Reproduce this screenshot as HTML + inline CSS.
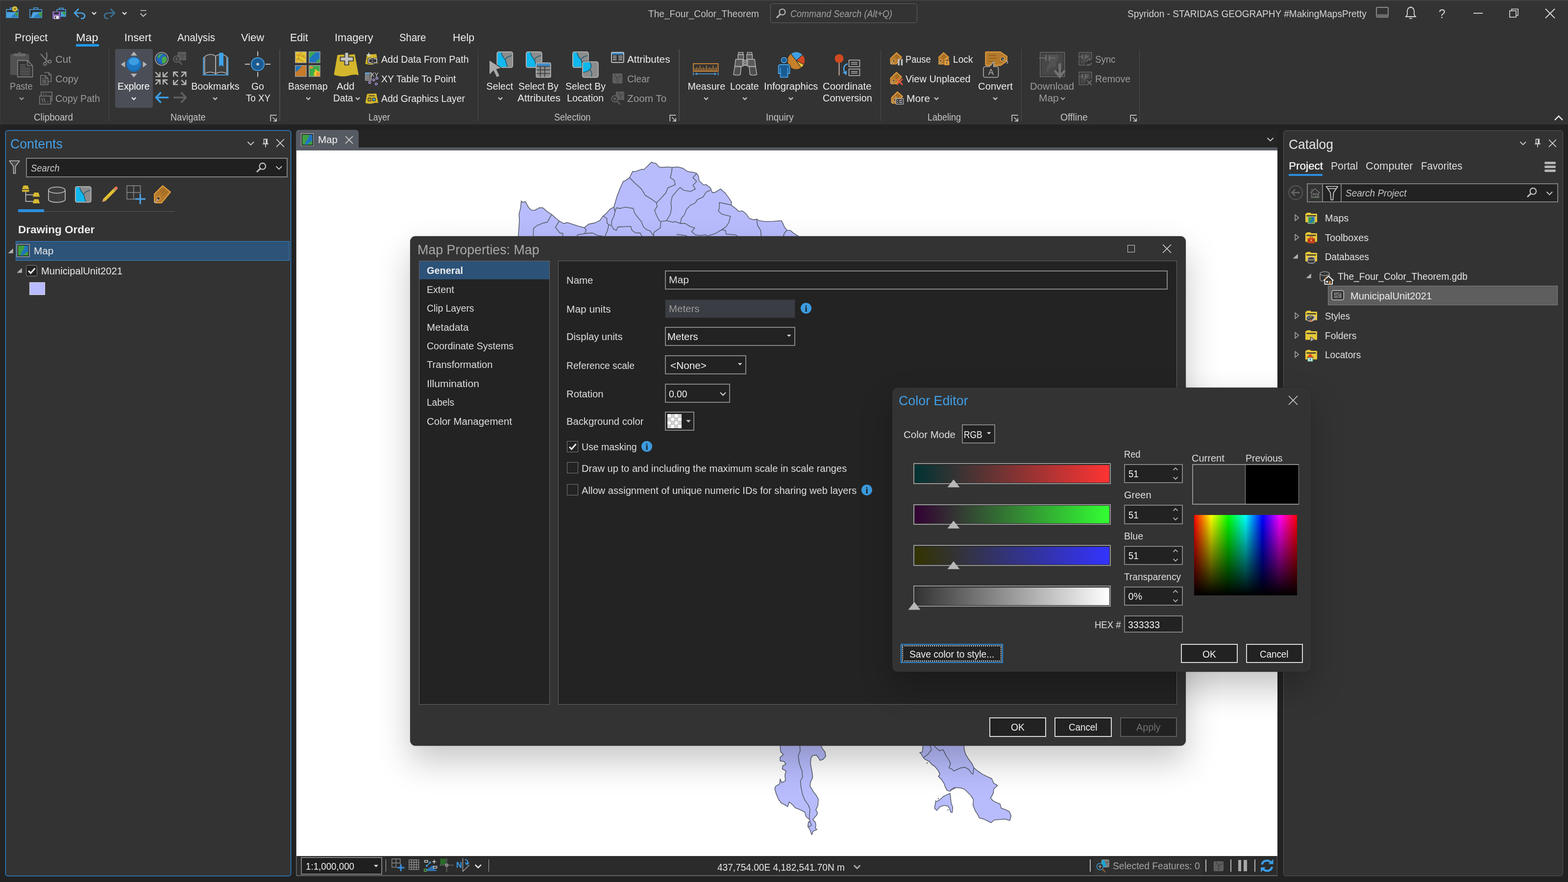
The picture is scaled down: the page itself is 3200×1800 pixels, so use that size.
<!DOCTYPE html>
<html lang="en"><head><meta charset="utf-8"><title>ArcGIS Pro - Map Properties</title>
<style>
*{box-sizing:border-box;margin:0;padding:0}
html,body{width:3200px;height:1800px;overflow:hidden;background:#222222;font-family:"Liberation Sans",sans-serif;}
.r{position:absolute;display:block}
.t{position:absolute;display:block;white-space:nowrap;line-height:1;transform-origin:0 50%;}
#root{position:absolute;left:0;top:0;width:3200px;height:1800px;overflow:hidden;will-change:transform}
</style></head>
<body><div id="root">
<!-- p_base -->
<div class="r" style="left:0.0px;top:0.0px;width:3200.0px;height:254.0px;background:#333333;"></div>
<div class="r" style="left:0.0px;top:0.0px;width:3200.0px;height:1.5px;background:#404040;"></div>
<div class="r" style="left:0.0px;top:0.0px;width:1.3px;height:254.0px;background:#3d3d3d;"></div>
<!-- icons_qat -->
<svg class="r" style="left:12.0px;top:12.0px;" width="28" height="25" viewBox="0 -1 28 25"><path d="M9 6.5 V3 H17 V6.5" fill="none" stroke="#4aa3e3" stroke-width="1.6" /><rect x="1" y="6.5" width="24" height="16.5" fill="#2b2b2b" stroke="#4aa3e3" stroke-width="1.6"/><path d="M1.8 11.5 H24.2 V22.2 H1.8 Z" fill="#4aa3e3" /><path d="M11 22.2 C13 17 17 15 21 15.5 L24.2 18 V22.2 Z" fill="#2f80c0" /><path d="M17 15 L24.2 11.5 V21 Z" fill="#3f9c3a" /><polygon points="24.4,5.2 22.3,6.9 22.6,9.6 19.9,9.3 18.2,11.4 16.5,9.3 13.8,9.6 14.1,6.9 12.0,5.2 14.1,3.5 13.8,0.8 16.5,1.1 18.2,-1.0 19.9,1.1 22.6,0.8 22.3,3.5" fill="#f0d23c"/><circle cx="18.2" cy="5.2" r="2.6" fill="#9a7d1c"/></svg>
<svg class="r" style="left:59.5px;top:12.0px;" width="28" height="25" viewBox="0 -1 28 25"><path d="M9 6.5 V3 H17 V6.5" fill="none" stroke="#4aa3e3" stroke-width="1.6" /><rect x="1" y="6.5" width="24" height="16.5" fill="#2b2b2b" stroke="#4aa3e3" stroke-width="1.6"/><path d="M3 23 L7 11.5 H27 L23 23 Z" fill="#4aa3e3" /><path d="M9 23 C12 17 16 15 21 15.5 L24 23 Z" fill="#2f80c0" /><path d="M18 14 L26.5 12 L23.5 22 Z" fill="#3f9c3a" /></svg>
<svg class="r" style="left:106.5px;top:12.5px;" width="28" height="27" viewBox="0 0 28 27"><path d="M14 6.5 V3.5 H22 V6.5" fill="none" stroke="#4aa3e3" stroke-width="1.6" /><rect x="9" y="6.5" width="18" height="14" fill="#2b2b2b" stroke="#4aa3e3" stroke-width="1.6"/><path d="M17 10.5 H26.2 V19.8 H17 Z" fill="#4aa3e3" /><path d="M19 13 L26 10.5 V19 Z" fill="#3f9c3a" /><rect x="0.8" y="10.5" width="14.5" height="15" fill="#8c6bc0" stroke="#8c6bc0" stroke-width="1.2" rx="1.5"/><rect x="3.2" y="11.5" width="9.5" height="5" fill="#333333"/><rect x="3.8" y="19.5" width="9" height="6" fill="#f0f0f0"/><rect x="5" y="20.5" width="2.5" height="4" fill="#333333"/></svg>
<svg class="r" style="left:149.5px;top:15.5px;" width="26" height="25" viewBox="0 0 26 25"><path d="M10.5 2 L2 10.5 L10.5 19 M2.5 10.5 H14.5 C20.5 10.5 23 14 23 16.5 C23 20 20 22 15 22" fill="none" stroke="#4aa3e3" stroke-width="2.7" stroke-linejoin="miter"/></svg>
<svg class="r" style="left:186.4px;top:22.9px;" width="12.2" height="8.1" viewBox="0 0 12.2 8.1"><path d="M2 2 L6.1 6.1 L10.2 2" fill="none" stroke="#e0e0e0" stroke-width="2.3"/></svg>
<svg class="r" style="left:210.0px;top:15.5px;" width="26" height="25" viewBox="0 0 26 25"><path d="M15.5 2 L24 10.5 L15.5 19 M23.5 10.5 H11.5 C5.5 10.5 3 14 3 16.5 C3 20 6 22 11 22" fill="none" stroke="#3d7295" stroke-width="2.7" /></svg>
<svg class="r" style="left:247.9px;top:22.9px;" width="12.2" height="8.1" viewBox="0 0 12.2 8.1"><path d="M2 2 L6.1 6.1 L10.2 2" fill="none" stroke="#e0e0e0" stroke-width="2.3"/></svg>
<svg class="r" style="left:285.0px;top:19.0px;" width="15" height="17" viewBox="0 0 15 17"><path d="M1.5 2.5 H13.5" fill="none" stroke="#c8c8c8" stroke-width="1.6" /><path d="M1.5 8.5 L7.5 14.5 L13.5 8.5" fill="none" stroke="#c8c8c8" stroke-width="1.8" /></svg>
<svg class="r" style="left:2807.0px;top:12.0px;" width="30" height="30" viewBox="0 0 30 30"><rect x="2" y="3" width="24" height="20" fill="none" stroke="#8a8a8a" stroke-width="2" rx="2"/><rect x="2" y="17" width="24" height="6" fill="#6a6a6a"/></svg>
<svg class="r" style="left:2866.0px;top:12.0px;" width="26" height="28" viewBox="0 0 26 28"><path d="M13 3 C8 3 6 7 6 12 V18 L3 22 H23 L20 18 V12 C20 7 18 3 13 3 Z" fill="none" stroke="#d8d8d8" stroke-width="1.8" /><path d="M10 25.5 H16" fill="none" stroke="#d8d8d8" stroke-width="1.8" /><circle cx="13" cy="2.5" r="1.2" fill="#d8d8d8"/></svg>
<svg class="r" style="left:3007.0px;top:25.0px;" width="19" height="4" viewBox="0 0 19 4"><path d="M0 2 H19" fill="none" stroke="#d8d8d8" stroke-width="1.8" /></svg>
<svg class="r" style="left:3080.0px;top:17.0px;" width="20" height="20" viewBox="0 0 20 20"><rect x="1" y="5" width="13" height="13" fill="none" stroke="#d8d8d8" stroke-width="1.6"/><path d="M5 5 V1.5 H18 V14.5 H14" fill="none" stroke="#d8d8d8" stroke-width="1.6" /></svg>
<svg class="r" style="left:3153.0px;top:17.0px;" width="21" height="21" viewBox="0 0 21 21"><path d="M1 1 L20 20 M20 1 L1 20" fill="none" stroke="#d8d8d8" stroke-width="1.8" /></svg>
<svg class="r" style="left:3171.0px;top:234.0px;" width="20" height="13" viewBox="0 0 20 13"><path d="M2 11 L10 3 L18 11" fill="none" stroke="#f0f0f0" stroke-width="2.4" /></svg>
<svg class="r" style="left:1583.0px;top:16.0px;" width="22" height="24" viewBox="0 0 22 24"><circle cx="13.5" cy="8.5" r="6" fill="none" stroke="#b8b8b8" stroke-width="2.2"/><path d="M9.3 12.8 L2 20.5" fill="none" stroke="#b8b8b8" stroke-width="3" /></svg>
<!-- p_ribbon -->
<span class="t" style="left:1323.2px;top:18.1px;font-size:20.5px;color:#c4c4c4;transform:scaleX(0.931);">The_Four_Color_Theorem</span>
<div class="r" style="left:1572.0px;top:7.0px;width:299.5px;height:39.5px;border:1.5px solid #636363;border-radius:5px;"></div>
<span class="t" style="left:1612.7px;top:18.4px;font-size:20.5px;color:#a0a0a0;font-style:italic;transform:scaleX(0.880);">Command Search (Alt+Q)</span>
<span class="t" style="left:2300.9px;top:18.1px;font-size:20.5px;color:#d4d4d4;transform:scaleX(0.930);">Spyridon - STARIDAS GEOGRAPHY #MakingMapsPretty</span>
<span class="t" style="left:2936.2px;top:15.0px;font-size:26px;color:#d0d0d0;transform:scaleX(0.950);">?</span>
<span class="t" style="left:29.9px;top:65.8px;font-size:22px;color:#ececec;transform:scaleX(0.983);">Project</span>
<span class="t" style="left:155.2px;top:65.8px;font-size:22px;color:#f2f2f2;transform:scaleX(1.063);">Map</span>
<span class="t" style="left:253.8px;top:65.8px;font-size:22px;color:#ececec;">Insert</span>
<span class="t" style="left:362.2px;top:65.8px;font-size:22px;color:#ececec;transform:scaleX(0.941);">Analysis</span>
<span class="t" style="left:492.4px;top:65.8px;font-size:22px;color:#ececec;transform:scaleX(0.996);">View</span>
<span class="t" style="left:592.4px;top:65.8px;font-size:22px;color:#ececec;transform:scaleX(0.970);">Edit</span>
<span class="t" style="left:682.6px;top:65.8px;font-size:22px;color:#ececec;transform:scaleX(0.989);">Imagery</span>
<span class="t" style="left:815.4px;top:65.8px;font-size:22px;color:#ececec;transform:scaleX(0.928);">Share</span>
<span class="t" style="left:924.1px;top:65.8px;font-size:22px;color:#ececec;transform:scaleX(0.977);">Help</span>
<div class="r" style="left:155.0px;top:89.5px;width:47.0px;height:5.5px;background:#1e98ea;"></div>
<div class="r" style="left:221.8px;top:101.0px;width:1.5px;height:146.0px;background:#4b4b4b;"></div>
<div class="r" style="left:570.0px;top:101.0px;width:1.5px;height:146.0px;background:#4b4b4b;"></div>
<div class="r" style="left:974.8px;top:101.0px;width:1.5px;height:146.0px;background:#4b4b4b;"></div>
<div class="r" style="left:1385.0px;top:101.0px;width:1.5px;height:146.0px;background:#4b4b4b;"></div>
<div class="r" style="left:1796.7px;top:101.0px;width:1.5px;height:146.0px;background:#4b4b4b;"></div>
<div class="r" style="left:2083.7px;top:101.0px;width:1.5px;height:146.0px;background:#4b4b4b;"></div>
<div class="r" style="left:2324.9px;top:101.0px;width:1.5px;height:146.0px;background:#4b4b4b;"></div>
<span class="t" style="left:69.2px;top:230.2px;font-size:19.7px;color:#c4c4c4;transform:scaleX(0.949);">Clipboard</span>
<span class="t" style="left:348.2px;top:230.2px;font-size:19.7px;color:#c4c4c4;transform:scaleX(0.920);">Navigate</span>
<span class="t" style="left:751.5px;top:230.2px;font-size:19.7px;color:#c4c4c4;transform:scaleX(0.893);">Layer</span>
<span class="t" style="left:1131.0px;top:230.2px;font-size:19.7px;color:#c4c4c4;transform:scaleX(0.917);">Selection</span>
<span class="t" style="left:1562.6px;top:230.2px;font-size:19.7px;color:#c4c4c4;transform:scaleX(0.961);">Inquiry</span>
<span class="t" style="left:1892.6px;top:230.2px;font-size:19.7px;color:#c4c4c4;transform:scaleX(0.915);">Labeling</span>
<span class="t" style="left:2164.0px;top:230.2px;font-size:19.7px;color:#c4c4c4;transform:scaleX(0.985);">Offline</span>
<span class="t" style="left:19.6px;top:167.2px;font-size:19.7px;color:#9c9c9c;transform:scaleX(0.924);">Paste</span>
<svg class="r" style="left:37.9px;top:196.8px;" width="12.2" height="8.1" viewBox="0 0 12.2 8.1"><path d="M2 2 L6.1 6.1 L10.2 2" fill="none" stroke="#9c9c9c" stroke-width="2.3"/></svg>
<span class="t" style="left:112.7px;top:112.1px;font-size:19.7px;color:#9c9c9c;transform:scaleX(1.044);">Cut</span>
<span class="t" style="left:112.7px;top:151.9px;font-size:19.7px;color:#9c9c9c;transform:scaleX(1.022);">Copy</span>
<span class="t" style="left:112.7px;top:192.0px;font-size:19.7px;color:#9c9c9c;transform:scaleX(0.990);">Copy Path</span>
<div class="r" style="left:235.0px;top:100.0px;width:77.0px;height:120.0px;background:#4b4e56;border-radius:4px;"></div>
<span class="t" style="left:240.2px;top:167.2px;font-size:19.7px;color:#ffffff;transform:scaleX(0.981);">Explore</span>
<svg class="r" style="left:267.2px;top:196.8px;" width="12.2" height="8.1" viewBox="0 0 12.2 8.1"><path d="M2 2 L6.1 6.1 L10.2 2" fill="none" stroke="#f0f0f0" stroke-width="2.3"/></svg>
<span class="t" style="left:390.2px;top:167.2px;font-size:19.7px;color:#ececec;">Bookmarks</span>
<svg class="r" style="left:433.4px;top:196.8px;" width="12.2" height="8.1" viewBox="0 0 12.2 8.1"><path d="M2 2 L6.1 6.1 L10.2 2" fill="none" stroke="#c4c4c4" stroke-width="2.3"/></svg>
<span class="t" style="left:512.6px;top:167.2px;font-size:19.7px;color:#ececec;transform:scaleX(0.986);">Go</span>
<span class="t" style="left:502.2px;top:190.9px;font-size:19.7px;color:#ececec;transform:scaleX(0.950);">To XY</span>
<span class="t" style="left:588.2px;top:167.2px;font-size:19.7px;color:#ececec;transform:scaleX(0.968);">Basemap</span>
<svg class="r" style="left:622.9px;top:196.8px;" width="12.2" height="8.1" viewBox="0 0 12.2 8.1"><path d="M2 2 L6.1 6.1 L10.2 2" fill="none" stroke="#c4c4c4" stroke-width="2.3"/></svg>
<span class="t" style="left:686.9px;top:167.2px;font-size:19.7px;color:#ececec;transform:scaleX(1.042);">Add</span>
<span class="t" style="left:680.2px;top:190.9px;font-size:19.7px;color:#ececec;transform:scaleX(0.974);">Data</span>
<svg class="r" style="left:723.9px;top:196.8px;" width="12.2" height="8.1" viewBox="0 0 12.2 8.1"><path d="M2 2 L6.1 6.1 L10.2 2" fill="none" stroke="#c4c4c4" stroke-width="2.3"/></svg>
<span class="t" style="left:778.2px;top:112.1px;font-size:19.7px;color:#ececec;transform:scaleX(0.995);">Add Data From Path</span>
<span class="t" style="left:778.2px;top:151.9px;font-size:19.7px;color:#ececec;transform:scaleX(0.988);">XY Table To Point</span>
<span class="t" style="left:778.2px;top:192.0px;font-size:19.7px;color:#ececec;transform:scaleX(0.982);">Add Graphics Layer</span>
<span class="t" style="left:992.6px;top:167.2px;font-size:19.7px;color:#ececec;">Select</span>
<svg class="r" style="left:1014.5px;top:196.8px;" width="12.2" height="8.1" viewBox="0 0 12.2 8.1"><path d="M2 2 L6.1 6.1 L10.2 2" fill="none" stroke="#c4c4c4" stroke-width="2.3"/></svg>
<span class="t" style="left:1057.6px;top:167.2px;font-size:19.7px;color:#ececec;transform:scaleX(0.982);">Select By</span>
<span class="t" style="left:1055.7px;top:190.9px;font-size:19.7px;color:#ececec;transform:scaleX(1.058);">Attributes</span>
<span class="t" style="left:1153.9px;top:167.2px;font-size:19.7px;color:#ececec;transform:scaleX(0.984);">Select By</span>
<span class="t" style="left:1157.2px;top:190.9px;font-size:19.7px;color:#ececec;transform:scaleX(1.010);">Location</span>
<span class="t" style="left:1279.5px;top:112.1px;font-size:19.7px;color:#ececec;transform:scaleX(1.052);">Attributes</span>
<span class="t" style="left:1279.5px;top:151.9px;font-size:19.7px;color:#9c9c9c;transform:scaleX(0.982);">Clear</span>
<span class="t" style="left:1279.5px;top:192.0px;font-size:19.7px;color:#9c9c9c;transform:scaleX(1.052);">Zoom To</span>
<span class="t" style="left:1403.5px;top:167.2px;font-size:19.7px;color:#ececec;">Measure</span>
<svg class="r" style="left:1434.5px;top:196.8px;" width="12.2" height="8.1" viewBox="0 0 12.2 8.1"><path d="M2 2 L6.1 6.1 L10.2 2" fill="none" stroke="#c4c4c4" stroke-width="2.3"/></svg>
<span class="t" style="left:1490.2px;top:167.2px;font-size:19.7px;color:#ececec;transform:scaleX(0.989);">Locate</span>
<svg class="r" style="left:1513.9px;top:196.8px;" width="12.2" height="8.1" viewBox="0 0 12.2 8.1"><path d="M2 2 L6.1 6.1 L10.2 2" fill="none" stroke="#c4c4c4" stroke-width="2.3"/></svg>
<span class="t" style="left:1559.2px;top:167.2px;font-size:19.7px;color:#ececec;transform:scaleX(1.030);">Infographics</span>
<svg class="r" style="left:1607.9px;top:196.8px;" width="12.2" height="8.1" viewBox="0 0 12.2 8.1"><path d="M2 2 L6.1 6.1 L10.2 2" fill="none" stroke="#c4c4c4" stroke-width="2.3"/></svg>
<span class="t" style="left:1679.2px;top:167.2px;font-size:19.7px;color:#ececec;transform:scaleX(1.033);">Coordinate</span>
<span class="t" style="left:1679.2px;top:190.9px;font-size:19.7px;color:#ececec;transform:scaleX(1.014);">Conversion</span>
<span class="t" style="left:1847.9px;top:112.1px;font-size:19.7px;color:#ececec;transform:scaleX(0.924);">Pause</span>
<span class="t" style="left:1944.6px;top:112.1px;font-size:19.7px;color:#ececec;transform:scaleX(0.976);">Lock</span>
<span class="t" style="left:1847.9px;top:151.9px;font-size:19.7px;color:#ececec;transform:scaleX(1.013);">View Unplaced</span>
<span class="t" style="left:1849.8px;top:192.0px;font-size:19.7px;color:#ececec;transform:scaleX(1.068);">More</span>
<svg class="r" style="left:1904.9px;top:196.8px;" width="12.2" height="8.1" viewBox="0 0 12.2 8.1"><path d="M2 2 L6.1 6.1 L10.2 2" fill="none" stroke="#c4c4c4" stroke-width="2.3"/></svg>
<span class="t" style="left:1996.2px;top:167.2px;font-size:19.7px;color:#ececec;transform:scaleX(1.030);">Convert</span>
<svg class="r" style="left:2024.9px;top:196.8px;" width="12.2" height="8.1" viewBox="0 0 12.2 8.1"><path d="M2 2 L6.1 6.1 L10.2 2" fill="none" stroke="#c4c4c4" stroke-width="2.3"/></svg>
<span class="t" style="left:2101.8px;top:167.2px;font-size:19.7px;color:#9c9c9c;transform:scaleX(1.027);">Download</span>
<span class="t" style="left:2120.0px;top:190.9px;font-size:19.7px;color:#9c9c9c;transform:scaleX(1.062);">Map</span>
<svg class="r" style="left:2163.4px;top:196.8px;" width="12.2" height="8.1" viewBox="0 0 12.2 8.1"><path d="M2 2 L6.1 6.1 L10.2 2" fill="none" stroke="#9c9c9c" stroke-width="2.3"/></svg>
<span class="t" style="left:2235.0px;top:112.1px;font-size:19.7px;color:#9c9c9c;transform:scaleX(0.946);">Sync</span>
<span class="t" style="left:2235.0px;top:151.9px;font-size:19.7px;color:#9c9c9c;transform:scaleX(0.983);">Remove</span>
<!-- icons_ribbon -->
<svg class="r" style="left:19.5px;top:105.5px;" width="48" height="53" viewBox="0 0 48 53"><rect x="0.8" y="4" width="39" height="43" fill="#515151" rx="2.5"/><rect x="7" y="3.2" width="26" height="5.8" fill="#6a6a6a" stroke="#585858" stroke-width="1" rx="2.8"/><circle cx="19.8" cy="2.6" r="1.9" fill="none" stroke="#6a6a6a" stroke-width="1.6"/><path d="M16 17.5 H36 L46.5 28 V51 H16 Z" fill="#333333" stroke="#7e7e7e" stroke-width="1.8" /><path d="M36 17.5 V28 H46.5" fill="none" stroke="#7e7e7e" stroke-width="1.6" /><path d="M21 26.3 H32" fill="none" stroke="#6e6e6e" stroke-width="1.4" /><path d="M21 29.7 H32" fill="none" stroke="#6e6e6e" stroke-width="1.4" /><path d="M21 33.1 H42" fill="none" stroke="#6e6e6e" stroke-width="1.4" /><path d="M21 36.5 H42" fill="none" stroke="#6e6e6e" stroke-width="1.4" /><path d="M21 39.9 H42" fill="none" stroke="#6e6e6e" stroke-width="1.4" /><path d="M21 43.3 H42" fill="none" stroke="#6e6e6e" stroke-width="1.4" /><path d="M21 46.7 H42" fill="none" stroke="#6e6e6e" stroke-width="1.4" /></svg>
<svg class="r" style="left:82.3px;top:106.0px;" width="25" height="29" viewBox="0 0 25 29"><path d="M1 4 L17 22 M12.5 0.5 C14.5 5 14 12 11 19.5" fill="none" stroke="#7c7c7c" stroke-width="2.2" /><circle cx="19.6" cy="19.6" r="2.9" fill="none" stroke="#7c7c7c" stroke-width="1.9"/><circle cx="9.8" cy="24.2" r="2.9" fill="none" stroke="#7c7c7c" stroke-width="1.9"/></svg>
<svg class="r" style="left:81.5px;top:146.5px;" width="24" height="27" viewBox="0 0 24 27"><path d="M8.5 1 H17.5 L22.5 6 V19.5 H17" fill="none" stroke="#7c7c7c" stroke-width="1.6" /><path d="M17.5 1 V6 H22.5" fill="none" stroke="#7c7c7c" stroke-width="1.4" /><path d="M1 7 H10 L16 13 V26 H1 Z" fill="#333333" stroke="#7c7c7c" stroke-width="1.6" /><path d="M10 7 V13 H16" fill="none" stroke="#7c7c7c" stroke-width="1.4" /><path d="M4 13 H7.5 M4 16.5 H13 M4 19.5 H13 M4 22.5 H13" fill="none" stroke="#7c7c7c" stroke-width="1.3" /></svg>
<svg class="r" style="left:80.0px;top:186.8px;" width="27" height="27" viewBox="0 0 27 27"><path d="M4 8 V1 H26 V18.5 H24" fill="none" stroke="#7c7c7c" stroke-width="1.6" /><path d="M8 5.5 H10.5 M13 5.5 H15.5" fill="none" stroke="#7c7c7c" stroke-width="1.3" /><rect x="0.8" y="9" width="22.5" height="16.5" fill="#333333" stroke="#7c7c7c" stroke-width="1.6"/><path d="M5.5 13 L8 22 M10 13 L12.5 22 M16.5 21 H18.5" fill="none" stroke="#7c7c7c" stroke-width="1.5" /></svg>
<svg class="r" style="left:246.0px;top:105.0px;" width="55" height="54" viewBox="0 0 55 54"><circle cx="27.2" cy="26.4" r="15.3" fill="#1a6db5"/><circle cx="27.2" cy="24.6" r="13.4" fill="#1f78c4"/><ellipse cx="27.2" cy="20.5" rx="10.6" ry="7.4" fill="#3d9de2"/><path d="M27.2 0.3 L33.7 8.4 H20.7 Z M27.2 52.9 L33.7 45.2 H20.7 Z M0.7 26.4 L9.2 20.2 V32.8 Z M53.7 26.4 L45.6 20.2 V32.8 Z" fill="#b4b4b4" /></svg>
<svg class="r" style="left:316.1px;top:106.1px;" width="28" height="28" viewBox="0 0 28 28"><circle cx="14" cy="14" r="13.1" fill="none" stroke="#c8c2c8" stroke-width="1.3"/><circle cx="14" cy="14" r="10.9" fill="#2268bd"/><path d="M7 7 C9 4.5 13 3.5 17 4 C15 6 12 6 11.5 9 C11 11 8 11 7 13 C5.5 11 6 9 7 7 Z" fill="#46ab48" /><path d="M15 12 C17 9.5 20 9 22.5 10 C24.5 12 25 15.5 23.5 19 C21.5 22.5 18 24.5 15.5 24 C16 21.5 14 20 14.5 17.5 C14.8 15.5 13.8 14 15 12 Z" fill="#46ab48" /></svg>
<svg class="r" style="left:353.0px;top:106.3px;" width="28" height="28" viewBox="0 0 28 28"><rect x="10.5" y="0.8" width="15.5" height="15.5" fill="#5a5a5a" stroke="#6a6a6a" stroke-width="1.2"/><path d="M15 1 C15.5 5 18 6.5 19 10 C19.3 12.5 19 14.5 19.5 16 M19 10 C20 7 22.5 5.5 26 5" fill="none" stroke="#454545" stroke-width="1.2" /><circle cx="7.6" cy="14.6" r="6.4" fill="#333333" stroke="#686868" stroke-width="1.8"/><path d="M4 14.6 H11.2 M7.6 11 V18.2" fill="none" stroke="#686868" stroke-width="1.7" /><path d="M12.3 19.5 L18.5 26" fill="none" stroke="#5e5e5e" stroke-width="2.6" /></svg>
<svg class="r" style="left:316.3px;top:146.0px;" width="28" height="28" viewBox="0 0 28 28"><path d="M1.2 1.2 L9.2 9.2 M1.2 10.4 H10.4 V1.2 M26.2 1.2 L18.2 9.2 M26.2 10.4 H17 V1.2 M1.2 26.4 L9.2 18.4 M1.2 17.2 H10.4 V26.4 M26.2 26.4 L18.2 18.4 M26.2 17.2 H17 V26.4 " fill="none" stroke="#b8b8b8" stroke-width="2.4" /></svg>
<svg class="r" style="left:352.8px;top:146.0px;" width="28" height="28" viewBox="0 0 28 28"><path d="M10.4 10.4 L2.4 2.4 M10.4 1.2 H1.2 V10.4 M17 10.4 L25 2.4 M17 1.2 H26.2 V10.4 M10.4 17.2 L2.4 25.2 M10.4 26.4 H1.2 V17.2 M17 17.2 L25 25.2 M17 26.4 H26.2 V17.2 " fill="none" stroke="#b8b8b8" stroke-width="2.4" /></svg>
<svg class="r" style="left:316.0px;top:187.0px;" width="29" height="24" viewBox="0 0 29 24"><path d="M12.5 1.5 L2.5 12 L12.5 22.5 M3 12 H28" fill="none" stroke="#3a9fe9" stroke-width="3.7" /></svg>
<svg class="r" style="left:352.5px;top:187.0px;" width="29" height="24" viewBox="0 0 29 24"><path d="M16.5 1.5 L26.5 12 L16.5 22.5 M26 12 H1" fill="none" stroke="#606060" stroke-width="3.7" /></svg>
<svg class="r" style="left:414.3px;top:107.0px;" width="53" height="48" viewBox="0 0 53 48"><path d="M1.2 9.5 V46 H51 V9.5" fill="none" stroke="#4a9fe0" stroke-width="2.2" /><path d="M3.6 9 C9 3.5 20 2.5 26.2 7.5 V44 C20 38.5 9 39.5 3.6 44 Z" fill="#3e3e3e" stroke="#b8b8b8" stroke-width="1.6" stroke-linejoin="round"/><path d="M48.8 9 C43.4 3.5 32.4 2.5 26.2 7.5 V44 C32.4 38.5 43.4 39.5 48.8 44 Z" fill="#3e3e3e" stroke="#b8b8b8" stroke-width="1.6" stroke-linejoin="round"/><path d="M33 0.8 H42 V29.5 L37.5 25.6 L33 29.5 Z" fill="#3fa3ea" /></svg>
<svg class="r" style="left:498.8px;top:103.9px;" width="54" height="54" viewBox="0 0 54 54"><circle cx="27" cy="27" r="13.2" fill="#1b5b93" stroke="#4aa3e3" stroke-width="1.8"/><circle cx="27" cy="27" r="2.7" fill="#d4d4d4"/><path d="M27 0.8 V10.6 M27 43 V53 M0.8 27 H11 M42.5 27 H53" fill="none" stroke="#c0c0c0" stroke-width="2" /></svg>
<svg class="r" style="left:551.0px;top:233.5px;" width="15" height="15" viewBox="0 0 15 15"><path d="M13.5 1.2 H1.2 V13.5" fill="none" stroke="#c8c8c8" stroke-width="1.7" /><path d="M5.5 5.5 L13 13 M13.2 7 V13.2 H7" fill="none" stroke="#c8c8c8" stroke-width="1.7" /></svg>
<svg class="r" style="left:601.6px;top:105.0px;" width="52" height="52" viewBox="0 0 52 52"><rect x="0.7" y="0.7" width="22.3" height="22.3" fill="#e6c730" stroke="#a6a6a6" stroke-width="1.4"/><path d="M2 8 C8 5 12 9 22 14 M10 1.5 C9 8 6 12 4 22 M13 1.5 C12 6 17 9 22 10.5 M2 15 C8 16 14 19 19 22" fill="none" stroke="#d08a2a" stroke-width="1.3" /><path d="M16 8 l2.5 0 l-1.2 3 z M7 13 l2.5 0 l-1.2 3 z M11 16.5 l3 0.5 l-2.5 1.5 z" fill="#5ab040" /><rect x="28.7" y="0.7" width="22.3" height="22.3" fill="#1f74c0" stroke="#a6a6a6" stroke-width="1.4"/><path d="M29.4 1.4 H42 C40 5 36 6 34.5 9 C33 12 31 12.5 29.4 14 Z" fill="#3fa84a" /><path d="M50.3 16 C47 15 44 18 43.5 22.3 H50.3 Z" fill="#3fa84a" /><rect x="0.7" y="28.7" width="22.3" height="22.3" fill="#c67a2a" stroke="#a6a6a6" stroke-width="1.4"/><path d="M1.4 29.4 H15 C12 32 10.5 33 9 36 C7 38 5 39 1.4 42 Z" fill="#1f74c0" /><rect x="28.7" y="28.7" width="22.3" height="22.3" fill="#3fa84a" stroke="#a6a6a6" stroke-width="1.4"/><path d="M30 31 C33 30 36 30.5 37.5 32.5 C36 35 33 35.5 30 34.5 Z" fill="#f09030" /><path d="M41 36 C44 37 45 40 50.3 41 V50.3 H38 C40 47 37 44 40 41.5 C42 40 40 38 41 36 Z" fill="#e8c830" /><path d="M44 42 C46 42 48 43.5 50.3 44 V50.3 H43.5 C44.5 48 43 45 44 42 Z" fill="#f09030" /></svg>
<svg class="r" style="left:680.8px;top:105.8px;" width="52" height="52" viewBox="0 0 52 52"><path d="M7.5 6.5 C16 4 32 7 43 4.5 L51 47.5 C40 43.5 32 49.5 20 50 C12 50 6 48.5 0.5 46.5 Z" fill="#d3b62b" /><path d="M22.5 0.8 H30.5 V10.5 H40 V18.5 H30.5 V26.5 H22.5 V18.5 H13.5 V10.5 H22.5 Z" fill="#c2c2c2" stroke="#2e2e2e" stroke-width="1.7" /></svg>
<svg class="r" style="left:744.8px;top:106.5px;" width="28" height="26" viewBox="0 0 28 26"><path d="M4 4.5 C9 3 17 4.5 23 3 L27 23.5 C21 21.5 17 24.5 10.5 24.8 C6.5 24.8 3 24 0.5 23 Z" fill="#d3b62b" /><path d="M7.5 0.5 V9 M3.2 4.8 H11.8" fill="none" stroke="#e0e0e0" stroke-width="1.8" /><rect x="6.5" y="12.5" width="18.5" height="9" fill="#333333" stroke="#333333" stroke-width="2.5"/><path d="M13 13 H7.5 V21 H13 M17.5 13 H24 V21 H17.5" fill="none" stroke="#e0e0e0" stroke-width="1.5" /><path d="M14.8 10.5 V24 M12.5 10.5 H17 M12.5 24 H17" fill="none" stroke="#e0e0e0" stroke-width="1.2" stroke-dasharray="1.5 1.2"/></svg>
<svg class="r" style="left:744.5px;top:145.6px;" width="28" height="28" viewBox="0 0 28 28"><rect x="0.8" y="2.5" width="12" height="15.5" fill="#6a6a6a" stroke="#b0b0b0" stroke-width="1.2"/><rect x="0.8" y="2.5" width="8" height="3.2" fill="#4aa3e3"/><path d="M2.5 8.5 H8 M2.5 11.5 H8 M2.5 14.5 H12" fill="none" stroke="#c8c8c8" stroke-width="1.1" stroke-dasharray="2 1.2"/><text x="11" y="11.3" font-size="13" textLength="16.5" lengthAdjust="spacingAndGlyphs" fill="#cccccc" font-family="Liberation Sans, sans-serif">XY</text><circle cx="24.2" cy="13.5" r="2.1" fill="none" stroke="#b49ae6" stroke-width="1.5"/><circle cx="17.7" cy="17" r="2.1" fill="none" stroke="#b49ae6" stroke-width="1.5"/><circle cx="9.5" cy="22.2" r="2.1" fill="none" stroke="#b49ae6" stroke-width="1.5"/><circle cx="22.8" cy="25.5" r="2.1" fill="none" stroke="#b49ae6" stroke-width="1.5"/></svg>
<svg class="r" style="left:744.8px;top:188.6px;" width="28" height="24" viewBox="0 0 28 24"><path d="M4 3 C9 1.5 17 3 23 1.5 L27 21.5 C21 19.5 17 22.5 10.5 22.8 C6.5 22.8 3 22 0.5 21 Z" fill="#d3b62b" /><path d="M7.5 6.5 H19.5" fill="none" stroke="#333333" stroke-width="1.6" /><circle cx="9.2" cy="14" r="3.2" fill="#c8a820" stroke="#333333" stroke-width="1.4"/><rect x="15.2" y="11.2" width="5.6" height="5.6" fill="#4aa3e3" stroke="#333333" stroke-width="1.3"/></svg>
<svg class="r" style="left:998.0px;top:105.0px;" width="50" height="54" viewBox="0 0 50 54"><g transform="translate(15.5,0) scale(1)"><rect x="0.8" y="0.8" width="32" height="32" fill="#8c8c8c" stroke="#bdbdbd" stroke-width="1.6" rx="3.5"/><path d="M2 3.5 Q2 2 3.5 2 H10 C10 9 14 12 17.5 17 C19.5 21 20 26 22 31.5 H3.5 Q2 31.5 2 30 Z" fill="#10b8ee" /><path d="M10 2 C10 9 14 12 17.5 17 C19.5 21 20 26 22 31.5 M17.5 17 C20 12 25 9.5 31.5 8.5" fill="none" stroke="#17566f" stroke-width="1.5" /></g><path d="M0.4 17.5 L25.4 33.8 L15.5 36.7 L21.9 50.1 L15.5 53 L9.1 39.6 L0.4 48.3 Z" fill="#a9a9a9" stroke="#333333" stroke-width="1.2" /></svg>
<svg class="r" style="left:1073.0px;top:105.0px;" width="53" height="54" viewBox="0 0 53 54"><g transform="translate(0,0) scale(1)"><rect x="0.8" y="0.8" width="32" height="32" fill="#8c8c8c" stroke="#bdbdbd" stroke-width="1.6" rx="3.5"/><path d="M2 3.5 Q2 2 3.5 2 H10 C10 9 14 12 17.5 17 C19.5 21 20 26 22 31.5 H3.5 Q2 31.5 2 30 Z" fill="#10b8ee" /><path d="M10 2 C10 9 14 12 17.5 17 C19.5 21 20 26 22 31.5 M17.5 17 C20 12 25 9.5 31.5 8.5" fill="none" stroke="#17566f" stroke-width="1.5" /></g><rect x="20.5" y="22.5" width="31" height="31" fill="#333333" rx="3"/><rect x="21.3" y="23.3" width="29.5" height="29.5" fill="#8c8c8c" stroke="#bdbdbd" stroke-width="1.6" rx="2.5"/><rect x="22.5" y="24.5" width="27.1" height="5.2" fill="#3f8fd0"/><path d="M22 30.5 H50 M22 37.7 H50 M22 45 H50 M29.7 30.5 V52 M38.7 30.5 V52" fill="none" stroke="#3a3a3a" stroke-width="1.7" /></svg>
<svg class="r" style="left:1168.2px;top:105.0px;" width="54" height="54" viewBox="0 0 54 54"><g transform="translate(0,0) scale(1)"><rect x="0.8" y="0.8" width="32" height="32" fill="#8c8c8c" stroke="#bdbdbd" stroke-width="1.6" rx="3.5"/><path d="M2 3.5 Q2 2 3.5 2 H10 C10 9 14 12 17.5 17 C19.5 21 20 26 22 31.5 H3.5 Q2 31.5 2 30 Z" fill="#10b8ee" /><path d="M10 2 C10 9 14 12 17.5 17 C19.5 21 20 26 22 31.5 M17.5 17 C20 12 25 9.5 31.5 8.5" fill="none" stroke="#17566f" stroke-width="1.5" /></g><rect x="19.2" y="19.4" width="35" height="35" fill="#333333" rx="4"/><g transform="translate(20,20.2) scale(1)"><rect x="0.8" y="0.8" width="32" height="32" fill="#8c8c8c" stroke="#bdbdbd" stroke-width="1.6" rx="3.5"/><path d="M2 3.5 Q2 2 3.5 2 H16 C17.5 5 19 7.5 18.5 10.5 C17.5 16 14 21 2 22.5 Z" fill="#10b8ee" /><path d="M16 2 C17.5 5 19 7.5 18.5 10.5 C17.5 16 14 21 2 22.5 M16.5 17.5 C19 20 21 23 19 31" fill="none" stroke="#17566f" stroke-width="1.5" /></g></svg>
<svg class="r" style="left:1246.6px;top:106.4px;" width="27" height="23" viewBox="0 0 27 23"><rect x="0.9" y="0.9" width="25" height="20.5" fill="#2c2c2c" stroke="#dcdcdc" stroke-width="1.6" rx="1.5"/><rect x="1.8" y="1.8" width="23.2" height="3.6" fill="#3f8fd0"/><path d="M3.5 8.5 H11.5 M15 8.5 H23.5 M3.5 12.2 H11.5 M15 12.2 H23.5 M3.5 16 H11.5 M15 16 H23.5" fill="none" stroke="#dcdcdc" stroke-width="1.5" /></svg>
<svg class="r" style="left:1249.8px;top:150.0px;" width="21" height="21" viewBox="0 0 21 21"><rect x="0.6" y="0.6" width="19" height="19" fill="#5c5c5c" stroke="#666666" stroke-width="1.2" rx="1.5"/><path d="M5 1 C5.5 5 8.5 7 9.5 11 C10 14 9.5 17 10.5 19.5 M9.5 11 C10.5 7.5 14 6 19.5 5.5" fill="none" stroke="#444444" stroke-width="1.4" /></svg>
<svg class="r" style="left:1246.8px;top:186.5px;" width="28" height="28" viewBox="0 0 28 28"><rect x="10.5" y="0.8" width="15.5" height="15.5" fill="#5a5a5a" stroke="#6a6a6a" stroke-width="1.2"/><path d="M15 1 C15.5 5 18 6.5 19 10 C19.3 12.5 19 14.5 19.5 16 M19 10 C20 7 22.5 5.5 26 5" fill="none" stroke="#454545" stroke-width="1.2" /><circle cx="7.6" cy="14.6" r="6.4" fill="#333333" stroke="#686868" stroke-width="1.8"/><path d="M4 14.6 H11.2 M7.6 11 V18.2" fill="none" stroke="#686868" stroke-width="1.7" /><path d="M12.3 19.5 L18.5 26" fill="none" stroke="#5e5e5e" stroke-width="2.6" /></svg>
<svg class="r" style="left:1366.0px;top:233.5px;" width="15" height="15" viewBox="0 0 15 15"><path d="M13.5 1.2 H1.2 V13.5" fill="none" stroke="#c8c8c8" stroke-width="1.7" /><path d="M5.5 5.5 L13 13 M13.2 7 V13.2 H7" fill="none" stroke="#c8c8c8" stroke-width="1.7" /></svg>
<svg class="r" style="left:1414.2px;top:129.2px;" width="53" height="26" viewBox="0 0 53 26"><rect x="1" y="1" width="50.5" height="15.5" fill="none" stroke="#d08a3a" stroke-width="1.8"/><path d="M4.5 16 V10 M7.85 16 V8 M11.2 16 V10 M14.55 16 V5 M17.9 16 V10 M21.25 16 V8 M24.6 16 V10 M27.95 16 V5 M31.3 16 V10 M34.65 16 V8 M38 16 V10 M41.35 16 V5 M44.7 16 V10 M48.05 16 V8 " fill="none" stroke="#d08a3a" stroke-width="1.5" /><path d="M1 18.5 V25 M51.5 18.5 V25 M4.5 21.8 H48" fill="none" stroke="#4aa3e3" stroke-width="1.6" /><path d="M8.5 19 L4 21.8 L8.5 24.6 Z M44 19 L48.5 21.8 L44 24.6 Z" fill="#4aa3e3" /></svg>
<svg class="r" style="left:1495.8px;top:106.0px;" width="50" height="49.5" viewBox="0 0 50 49.5"><rect x="11" y="1" width="9.5" height="4.5" fill="#4a4a4a" stroke="#b6b6b6" stroke-width="1.4"/><rect x="29" y="1" width="9.5" height="4.5" fill="#4a4a4a" stroke="#b6b6b6" stroke-width="1.4"/><path d="M10 5.5 H21.5 V15 H10 Z M28 5.5 H39.5 V15 H28 Z" fill="#5a5a5a" stroke="#b6b6b6" stroke-width="1.4" /><path d="M5.5 15 H20 V29.5 H3.5 Z M29.5 15 H44 L46 29.5 H29.5 Z" fill="#5a5a5a" stroke="#b6b6b6" stroke-width="1.5" /><path d="M3.5 30 H16.5 L15 46 C11 48 5 48 1 46 Z M33 30 H46 L48.5 46 C44.5 48 38.5 48 34.5 46 Z" fill="#4e4e4e" stroke="#b6b6b6" stroke-width="1.5" /><rect x="20" y="16.5" width="9.5" height="11" fill="#6a6a6a" stroke="#b6b6b6" stroke-width="1.3"/><rect x="22.6" y="22" width="4.2" height="4.2" fill="#333333" stroke="#d0d0d0" stroke-width="1.1"/><path d="M22 17.5 V20.5 M27.5 17.5 V20.5" fill="none" stroke="#d0d0d0" stroke-width="1" /></svg>
<svg class="r" style="left:1586.8px;top:105.0px;" width="57" height="54" viewBox="0 0 57 54"><path d="M38 18.6 L48.2 33.2 A17.8 17.8 0 0 1 27.0 4.6 Z" fill="#c6802a" stroke="#333333" stroke-width="1.1" /><path d="M38 18.6 L27.0 4.6 A17.8 17.8 0 0 1 51.2 6.7 Z" fill="#3f9fe0" stroke="#333333" stroke-width="1.1" /><path d="M38 18.6 L51.2 6.7 A17.8 17.8 0 0 1 53.7 27.0 Z" fill="#d04a20" stroke="#333333" stroke-width="1.1" /><path d="M38 18.6 L53.7 27.0 A17.8 17.8 0 0 1 48.2 33.2 Z" fill="#e8c030" stroke="#333333" stroke-width="1.1" /><circle cx="13" cy="17.8" r="8.4" fill="#333333"/><path d="M6 27 H20 Q25.5 27 25.5 32.5 V45.5 H21 V53.3 H5 V45.5 H0.8 V32.5 Q0.8 27 6 27 Z" fill="#333333" stroke="#333333" stroke-width="3.5" /><circle cx="13" cy="17.8" r="5.4" fill="#1b5b93" stroke="#4aa3e3" stroke-width="1.8"/><path d="M6 27 H20 Q24.5 27 24.5 31.5 V45 H20.5 V52.6 H5.7 V45 H1.7 V31.5 Q1.7 27 6 27 Z" fill="#1b5b93" stroke="#4aa3e3" stroke-width="1.8" /><path d="M5.7 33 V45 M20.5 33 V45" fill="none" stroke="#4aa3e3" stroke-width="1.5" /></svg>
<svg class="r" style="left:1703.0px;top:109.5px;" width="53" height="46" viewBox="0 0 53 46"><path d="M9.5 17 V44" fill="none" stroke="#e4c8bc" stroke-width="1.6" /><circle cx="9.5" cy="9.5" r="9" fill="#d04a20"/><rect x="29.5" y="12.6" width="22" height="13.5" fill="none" stroke="#b6b6b6" stroke-width="1.6"/><rect x="29.5" y="30.8" width="22" height="13.5" fill="none" stroke="#b6b6b6" stroke-width="1.6"/><path d="M34 17.5 H47 M34 21 H47 M34 35.7 H47 M34 39.2 H47" fill="none" stroke="#b6b6b6" stroke-width="1.4" /><path d="M27 20.5 C19.5 21.5 16.5 30 22 40" fill="none" stroke="#4aa3e3" stroke-width="2.6" /><path d="M17 38 L24.5 43.5 L25.5 34.5 Z" fill="#4aa3e3" /></svg>
<svg class="r" style="left:1815.5px;top:106.0px;" width="28" height="28" viewBox="0 0 28 28"><g transform="translate(0,0.7) scale(1)"><path d="M13.5 0.8 L24 10 L13 24 H4 Q1.5 24 1.5 21.5 V12.5 Z" fill="#b47a2c" stroke="#e8a040" stroke-width="1.7" stroke-linejoin="round"/><path d="M10.5 9.5 L16 4.8 M12.5 13 L19 7.5" fill="none" stroke="#8a5a1c" stroke-width="1.4" /><circle cx="7.6" cy="17.6" r="2.6" fill="#333333" stroke="#e8a040" stroke-width="1.4"/><path d="M7.6 17.6 C5 19.5 4.5 23.5 1 23" fill="none" stroke="#a8a8a8" stroke-width="1.3" /></g><rect x="16.3" y="14.5" width="3.6" height="13" fill="#c0c0c0"/><rect x="22.6" y="14.5" width="3.6" height="13" fill="#c0c0c0"/></svg>
<svg class="r" style="left:1915.3px;top:106.0px;" width="28" height="28" viewBox="0 0 28 28"><g transform="translate(-3,0)"><g transform="translate(0,0.7) scale(1)"><path d="M13.5 0.8 L24 10 L13 24 H4 Q1.5 24 1.5 21.5 V12.5 Z" fill="#b47a2c" stroke="#e8a040" stroke-width="1.7" stroke-linejoin="round"/><path d="M10.5 9.5 L16 4.8 M12.5 13 L19 7.5" fill="none" stroke="#8a5a1c" stroke-width="1.4" /><circle cx="7.6" cy="17.6" r="2.6" fill="#333333" stroke="#e8a040" stroke-width="1.4"/><path d="M7.6 17.6 C5 19.5 4.5 23.5 1 23" fill="none" stroke="#a8a8a8" stroke-width="1.3" /></g></g><rect x="11.5" y="17.8" width="11.4" height="9.5" fill="#e8a040" stroke="#333333" stroke-width="0.8" rx="1"/><path d="M14 17.8 V15 C14 11.5 20.4 11.5 20.4 15 V17.8" fill="none" stroke="#e8a040" stroke-width="1.8" /><rect x="16.5" y="20.5" width="1.6" height="3.6" fill="#333333"/></svg>
<svg class="r" style="left:1815.5px;top:146.0px;" width="28" height="29" viewBox="0 0 28 29"><g transform="translate(0,0.9) scale(1)"><path d="M13.5 0.8 L24 10 L13 24 H4 Q1.5 24 1.5 21.5 V12.5 Z" fill="#b47a2c" stroke="#e8a040" stroke-width="1.7" stroke-linejoin="round"/><path d="M10.5 9.5 L16 4.8 M12.5 13 L19 7.5" fill="none" stroke="#8a5a1c" stroke-width="1.4" /><circle cx="7.6" cy="17.6" r="2.6" fill="#333333" stroke="#e8a040" stroke-width="1.4"/><path d="M7.6 17.6 C5 19.5 4.5 23.5 1 23" fill="none" stroke="#a8a8a8" stroke-width="1.3" /></g><path d="M14 15 L26 27 M26 15 L14 27" fill="none" stroke="#e85a3a" stroke-width="2.8" /></svg>
<svg class="r" style="left:1816.5px;top:186.0px;" width="28" height="28" viewBox="0 0 28 28"><g transform="translate(1,0.6) scale(1)"><path d="M13.5 0.8 L24 10 L13 24 H4 Q1.5 24 1.5 21.5 V12.5 Z" fill="#b47a2c" stroke="#e8a040" stroke-width="1.7" stroke-linejoin="round"/><path d="M10.5 9.5 L16 4.8 M12.5 13 L19 7.5" fill="none" stroke="#8a5a1c" stroke-width="1.4" /><circle cx="7.6" cy="17.6" r="2.6" fill="#333333" stroke="#e8a040" stroke-width="1.4"/><path d="M7.6 17.6 C5 19.5 4.5 23.5 1 23" fill="none" stroke="#a8a8a8" stroke-width="1.3" /></g><rect x="11.5" y="15.3" width="15" height="11.2" fill="#333333" stroke="#b8b8b8" stroke-width="1.4"/><path d="M18 19 H24 M18 22.8 H24" fill="none" stroke="#d8d8f0" stroke-width="1.5" /><rect x="14" y="18.2" width="1.9" height="1.7" fill="#d8d8f0"/><rect x="14" y="22" width="1.9" height="1.7" fill="#d8d8f0"/><path d="M11 15.5 L12 11.5" fill="none" stroke="#b8b8b8" stroke-width="1.2" /></svg>
<svg class="r" style="left:2006.0px;top:104.5px;" width="52" height="55" viewBox="0 0 52 55"><path d="M7 0.9 H35.5 L49 10 V19.5 L36 28.5 H7 Q5.3 28.5 5.3 26.8 V2.6 Q5.3 0.9 7 0.9 Z" fill="#b47a2c" stroke="#e8a040" stroke-width="1.8" /><path d="M12 8 H27 M12 14 H28 M12 20 H24" fill="none" stroke="#8a5a1c" stroke-width="1.5" /><circle cx="39.8" cy="15.5" r="4" fill="#333333" stroke="#e8a040" stroke-width="1.7"/><circle cx="39.8" cy="15.5" r="1.2" fill="#4a8fd0"/><path d="M40 16 C44 17 48 17.5 50.5 21 C51 23 50 24 48.5 25" fill="none" stroke="#b0b0b0" stroke-width="1.5" /><rect x="1" y="31" width="30.5" height="21.7" fill="#333333" stroke="#b0b0b0" stroke-width="1.6" rx="3.5"/><path d="M13 31.8 L22.5 20.5 L21.5 31.8" fill="#333333" stroke="#b0b0b0" stroke-width="1.5" stroke-linejoin="round"/><path d="M13.5 31.9 H21" fill="none" stroke="#333333" stroke-width="2.4" /><text x="16.3" y="48" font-size="17" text-anchor="middle" fill="#b4b4b4" font-family="Liberation Sans, sans-serif">A</text></svg>
<svg class="r" style="left:2064.3px;top:233.5px;" width="15" height="15" viewBox="0 0 15 15"><path d="M13.5 1.2 H1.2 V13.5" fill="none" stroke="#c8c8c8" stroke-width="1.7" /><path d="M5.5 5.5 L13 13 M13.2 7 V13.2 H7" fill="none" stroke="#c8c8c8" stroke-width="1.7" /></svg>
<svg class="r" style="left:2119.5px;top:105.2px;" width="56" height="56" viewBox="0 0 56 56"><rect x="3" y="1.8" width="49.5" height="49.5" fill="none" stroke="#6e6e6e" stroke-width="1.6"/><rect x="5.6" y="4.4" width="44.3" height="44.3" fill="#474747"/><path d="M27 6 C31 8 35 7 38.5 5 L40 14 C36 19 34 25 35 31 C31 33 27 31 24 34 C21 36 19 40 20 44 C16 42 15 36 17 31 C20 26 22 22 21 16 C22 12 24 9 27 6 Z" fill="#525252" /><path d="M0.7 13.3 H14.8 M21.4 13.3 H33.6" fill="none" stroke="#6e6e6e" stroke-width="1.9" /><path d="M14.8 8.2 V18.2 M21.4 8.2 V18.2" fill="none" stroke="#6e6e6e" stroke-width="2.6" stroke-linecap="round"/><path d="M31.5 37.5 H53.5 L42.6 54 Z" fill="#333333" /><path d="M42.8 24.5 V50 M32.5 38.5 L42.8 51.5 L53 38.5" fill="none" stroke="#727272" stroke-width="5" /></svg>
<svg class="r" style="left:2200.8px;top:105.8px;" width="29" height="30" viewBox="0 0 29 30"><rect x="1.2" y="1.2" width="25.5" height="25.5" fill="none" stroke="#6e6e6e" stroke-width="1.5"/><rect x="3.6" y="3.6" width="20.7" height="20.7" fill="#474747"/><path d="M14 4 C16 5 18 5 20 4 L21 9 C19 12 18 15 18.5 18 C16 19 14 18 12.5 20 C11 18 10 15 11 12 C12.5 10 13 7 14 4 Z" fill="#525252" /><path d="M0.3 10 H8 M14.5 10 H20.5" fill="none" stroke="#6e6e6e" stroke-width="1.6" /><path d="M8 6.6 V13.4 M14.5 6.6 V13.4" fill="none" stroke="#6e6e6e" stroke-width="2" stroke-linecap="round"/><rect x="14.5" y="14" width="14" height="14.5" fill="#333333"/><path d="M16.3 20 C16.8 16.5 20 14.8 23 15.8 M26.4 22 C25.8 25.4 22.7 27.2 19.7 26.2" fill="none" stroke="#646464" stroke-width="2.3" /><path d="M21.5 13.2 L26.8 14.2 L23.3 18.6 Z M21.3 28.8 L16 27.8 L19.5 23.4 Z" fill="#646464" /></svg>
<svg class="r" style="left:2200.8px;top:145.9px;" width="29" height="30" viewBox="0 0 29 30"><rect x="1.2" y="1.2" width="25.5" height="25.5" fill="none" stroke="#6e6e6e" stroke-width="1.5"/><rect x="3.6" y="3.6" width="20.7" height="20.7" fill="#474747"/><path d="M14 4 C16 5 18 5 20 4 L21 9 C19 12 18 15 18.5 18 C16 19 14 18 12.5 20 C11 18 10 15 11 12 C12.5 10 13 7 14 4 Z" fill="#525252" /><path d="M0.3 10 H8 M14.5 10 H20.5" fill="none" stroke="#6e6e6e" stroke-width="1.6" /><path d="M8 6.6 V13.4 M14.5 6.6 V13.4" fill="none" stroke="#6e6e6e" stroke-width="2" stroke-linecap="round"/><rect x="15" y="15.5" width="14" height="14" fill="#333333"/><path d="M17.5 18 L27 27.5 M27 18 L17.5 27.5" fill="none" stroke="#646464" stroke-width="2.6" /></svg>
<svg class="r" style="left:2305.7px;top:233.5px;" width="15" height="15" viewBox="0 0 15 15"><path d="M13.5 1.2 H1.2 V13.5" fill="none" stroke="#c8c8c8" stroke-width="1.7" /><path d="M5.5 5.5 L13 13 M13.2 7 V13.2 H7" fill="none" stroke="#c8c8c8" stroke-width="1.7" /></svg>
<!-- p_contents -->
<div class="r" style="left:10.5px;top:265.5px;width:583.5px;height:1522.0px;background:#333333;border:1.5px solid #3a92dc;border-radius:5px;box-shadow:0 0 0 1px #17406a;"></div>
<span class="t" style="left:21.4px;top:280.3px;font-size:28px;color:#459fe6;transform:scaleX(0.953);">Contents</span>
<svg class="r" style="left:504.0px;top:287.5px;" width="16" height="10" viewBox="0 0 16 10"><path d="M1.5 1.5 L7.7 7.8 L14 1.5" fill="none" stroke="#d4d4d4" stroke-width="1.8" /></svg>
<svg class="r" style="left:535.0px;top:282.5px;" width="14" height="18" viewBox="0 0 14 18"><rect x="3.6" y="1" width="6.6" height="9" fill="none" stroke="#d4d4d4" stroke-width="1.6"/><path d="M8.6 1 V10" fill="none" stroke="#d4d4d4" stroke-width="2.6" /><path d="M1 10.6 H13 M7 10.6 V17.5" fill="none" stroke="#d4d4d4" stroke-width="1.7" /></svg>
<svg class="r" style="left:563.0px;top:283.0px;" width="18" height="18" viewBox="0 0 18 18"><path d="M1 1 L16.8 16.8 M16.8 1 L1 16.8" fill="none" stroke="#d4d4d4" stroke-width="1.7" /></svg>
<svg class="r" style="left:17.5px;top:327.0px;" width="24" height="29" viewBox="0 0 24 29"><path d="M1.2 1.2 H21.8 L13.5 12.5 V27 H9.5 V12.5 Z" fill="#4a4a4a" stroke="#bcbcbc" stroke-width="1.6" stroke-linejoin="round"/></svg>
<div class="r" style="left:53.0px;top:322.0px;width:534.0px;height:39.5px;background:#202020;border:2px solid #808080;"></div>
<span class="t" style="left:62.5px;top:332.6px;font-size:20.5px;color:#c8c8c8;font-style:italic;transform:scaleX(0.900);">Search</span>
<svg class="r" style="left:522.0px;top:331.0px;" width="22" height="22" viewBox="0 0 22 22"><circle cx="13.8" cy="8.2" r="6.3" fill="none" stroke="#c4c4c4" stroke-width="2.2"/><path d="M9.4 12.8 L2 20" fill="none" stroke="#c4c4c4" stroke-width="3" /></svg>
<svg class="r" style="left:562.0px;top:338.0px;" width="15" height="10" viewBox="0 0 15 10"><path d="M1.5 1.5 L7.3 7.3 L13 1.5" fill="none" stroke="#d4d4d4" stroke-width="1.8" /></svg>
<svg class="r" style="left:44.3px;top:378.0px;" width="38" height="38" viewBox="0 0 38 38"><path d="M8.5 13 V33 H25 M8.5 19.5 H25" fill="none" stroke="#d0d0d0" stroke-width="1.5" /><path d="M4 0.5 H12.5 L15.5 8 H1 Z" fill="#d8ba30" /><rect x="1" y="9.5" width="14.5" height="3.8" fill="#d8ba30"/><path d="M25.5 15 H34.5 L37.2 23.5 H22.8 Z" fill="#d8ba30" /><path d="M25.5 28.5 H34.5 L37.2 37 H22.8 Z" fill="#d8ba30" /></svg>
<svg class="r" style="left:98.3px;top:379.5px;" width="36" height="35" viewBox="0 0 36 35"><path d="M1 8 V27 C1 30 8 33 18 33 C28 33 35 30 35 27 V8" fill="#3c3c3c" stroke="#b4b4b4" stroke-width="1.8" /><ellipse cx="18" cy="8" rx="17" ry="6.4" fill="#3c3c3c" stroke="#b4b4b4" stroke-width="1.8"/><path d="M22 14.5 V33" fill="none" stroke="#474747" stroke-width="1" /></svg>
<svg class="r" style="left:153.0px;top:380.0px;" width="34" height="34" viewBox="0 0 34 34"><g transform="translate(0,0) scale(1)"><rect x="0.8" y="0.8" width="32" height="32" fill="#8c8c8c" stroke="#bdbdbd" stroke-width="1.6" rx="3.5"/><path d="M2 3.5 Q2 2 3.5 2 H10 C10 9 14 12 17.5 17 C19.5 21 20 26 22 31.5 H3.5 Q2 31.5 2 30 Z" fill="#10b8ee" /><path d="M10 2 C10 9 14 12 17.5 17 C19.5 21 20 26 22 31.5 M17.5 17 C20 12 25 9.5 31.5 8.5" fill="none" stroke="#17566f" stroke-width="1.5" /></g></svg>
<svg class="r" style="left:206.5px;top:379.0px;" width="35" height="35" viewBox="0 0 35 35"><path d="M1.5 33 L4 26.5 L25.5 5 L30 9.5 L8.5 31 Z" fill="#e0c030" /><path d="M25.5 5 L28.5 2 Q30 0.8 31.3 2 L33 3.8 Q34 5 33 6.3 L30 9.5 Z" fill="#ec7458" /><path d="M1.5 33 L4 26.5 L8.5 31 Z" fill="#d8a070" /><path d="M24 6.5 L28.5 11" fill="none" stroke="#8a8a8a" stroke-width="1.3" /></svg>
<svg class="r" style="left:257.5px;top:377.8px;" width="40" height="40" viewBox="0 0 40 40"><rect x="1" y="1" width="27.5" height="27.5" fill="none" stroke="#8a8a8a" stroke-width="1.5"/><path d="M14.7 1 V28.5 M1 14.7 H28.5" fill="none" stroke="#8a8a8a" stroke-width="1.5" /><rect x="17.5" y="17.5" width="21.5" height="21.5" fill="#333333"/><path d="M28.2 17.5 V38.5 M17.5 28.2 H39" fill="none" stroke="#4a9fe0" stroke-width="3.2" /></svg>
<svg class="r" style="left:311.5px;top:378.0px;" width="38" height="38" viewBox="0 0 38 38"><path d="M20 1 L36 14 L18 36 H7 Q3 36 3 32 V18 Z" fill="#b47a2c" stroke="#e8a040" stroke-width="1.8" stroke-linejoin="round"/><path d="M14.5 13 L22.5 6.5 M17 17 L26.5 9 M20 21 L30 12.5" fill="none" stroke="#8a5a1c" stroke-width="1.5" /><circle cx="11" cy="27" r="3.6" fill="#333333" stroke="#e8a040" stroke-width="1.7"/><path d="M10.5 27.5 C8.5 30 8 35.5 2 35" fill="none" stroke="#b0b0c0" stroke-width="1.5" /></svg>
<div class="r" style="left:36.5px;top:427.0px;width:53.5px;height:5.5px;background:#2b8ede;"></div>
<div class="r" style="left:90.0px;top:430.5px;width:267.0px;height:1.5px;background:#5a5a5a;"></div>
<span class="t" style="left:36.6px;top:457.3px;font-size:22.8px;color:#ececec;font-weight:bold;transform:scaleX(0.986);">Drawing Order</span>
<div class="r" style="left:32.0px;top:491.5px;width:558.5px;height:40.5px;background:#2e5378;border:1.5px solid #3a86cc;"></div>
<svg class="r" style="left:16.0px;top:506.8px;" width="11" height="10" viewBox="0 0 11 10"><path d="M10.8 0 V9.8 H0.3 Z" fill="#b0b0b0" /></svg>
<svg class="r" style="left:34.2px;top:498.2px;" width="26.5" height="26.5" viewBox="0 0 26.5 26.5"><g transform="scale(1)"><rect x="0.7" y="0.7" width="25.1" height="25.1" fill="#1a1a1a" stroke="#b4b4b4" stroke-width="1.4"/><rect x="3" y="3" width="20.5" height="20.5" fill="#3fa040"/><path d="M16 3 H23.5 V16.5 C21 15.5 18.5 17 17.5 19.5 C15.5 20 14 21.5 13 23.5 H8.5 C8 21 9 19 10.5 18 C9.5 16 10.5 14.5 12.5 14 C13 11 15.5 10.5 16 8 C16.5 6 15.5 4.5 16 3 Z" fill="#1f74c0" /></g></svg>
<span class="t" style="left:68.9px;top:503.2px;font-size:19.7px;color:#e8e8e8;transform:scaleX(1.052);">Map</span>
<svg class="r" style="left:34.0px;top:547.0px;" width="11" height="10" viewBox="0 0 11 10"><path d="M10.8 0 V9.8 H0.3 Z" fill="#b0b0b0" /></svg>
<div class="r" style="left:52.8px;top:541.3px;width:23.2px;height:22.6px;background:#222222;border:1.5px solid #8a8a8a;border-radius:3.5px;"></div>
<svg class="r" style="left:52.8px;top:541.3px;" width="23" height="23" viewBox="0 0 23 23"><path d="M5 11.5 L9.6 16.3 L18.5 6.5" fill="none" stroke="#e4e4e4" stroke-width="3.2" /></svg>
<span class="t" style="left:84.1px;top:543.5px;font-size:19.7px;color:#e8e8e8;transform:scaleX(1.024);">MunicipalUnit2021</span>
<div class="r" style="left:59.5px;top:576.2px;width:32.7px;height:26.0px;background:#b9bbff;border:1px solid #dcdcf0;"></div>
<!-- p_map -->
<div class="r" style="left:604.0px;top:265.0px;width:2003.0px;height:36.0px;background:#252525;"></div>
<div class="r" style="left:604.0px;top:265.0px;width:127.5px;height:37.0px;background:#565a62;border-radius:6px 6px 0 0;"></div>
<svg class="r" style="left:613.6px;top:271.8px;" width="26.5" height="26.5" viewBox="0 0 26.5 26.5"><g transform="scale(1)"><rect x="0.7" y="0.7" width="25.1" height="25.1" fill="#1a1a1a" stroke="#b4b4b4" stroke-width="1.4"/><rect x="3" y="3" width="20.5" height="20.5" fill="#3fa040"/><path d="M16 3 H23.5 V16.5 C21 15.5 18.5 17 17.5 19.5 C15.5 20 14 21.5 13 23.5 H8.5 C8 21 9 19 10.5 18 C9.5 16 10.5 14.5 12.5 14 C13 11 15.5 10.5 16 8 C16.5 6 15.5 4.5 16 3 Z" fill="#1f74c0" /></g></svg>
<span class="t" style="left:648.9px;top:276.3px;font-size:19.7px;color:#f0f0f0;transform:scaleX(1.044);">Map</span>
<svg class="r" style="left:703.5px;top:277.0px;" width="17" height="17" viewBox="0 0 17 17"><path d="M1 1 L16 16 M16 1 L1 16" fill="none" stroke="#d8d8d8" stroke-width="1.7" /></svg>
<div class="r" style="left:604.0px;top:300.5px;width:2003.0px;height:6.0px;background:#565a62;"></div>
<svg class="r" style="left:2585.0px;top:280.0px;" width="16" height="10" viewBox="0 0 16 10"><path d="M1.5 1.5 L7.5 7.5 L13.5 1.5" fill="none" stroke="#d0d0d0" stroke-width="1.8" /></svg>
<div class="r" style="left:604.0px;top:306.5px;width:2003.0px;height:1441.0px;background:#ffffff;"></div>
<div class="r" style="left:604.0px;top:306.5px;width:1.0px;height:1441.0px;background:#606060;"></div>
<svg class="r" style="left:604px;top:306.5px" width="2003" height="1441" viewBox="604 306.5 2003 1441"><path d="M1057.9 495.3 L1057.9 481.3 L1060.0 449.2 L1059.2 436.4 L1062.5 423.6 L1063.8 409.5 L1066.9 412.8 L1072.0 410.8 L1078.4 422.3 L1084.1 428.2 L1091.2 428.7 L1100.2 423.6 L1107.9 423.6 L1116.9 431.3 L1125.8 437.2 L1133.5 444.1 L1141.2 450.5 L1150.2 455.6 L1157.9 453.8 L1168.1 456.9 L1183.5 462.0 L1192.4 464.1 L1201.4 456.9 L1214.2 454.4 L1224.5 449.2 L1230.9 440.3 L1237.3 435.1 L1245.0 426.2 L1252.7 422.3 L1259.1 400.6 L1265.5 383.9 L1271.9 369.8 L1275.7 368.5 L1284.7 362.1 L1291.1 349.3 L1296.2 349.8 L1310.3 344.7 L1314.1 345.5 L1328.2 331.9 L1329.5 330.1 L1332.1 331.9 L1338.5 332.7 L1344.9 340.3 L1351.3 341.1 L1362.8 340.3 L1371.8 341.1 L1383.3 340.3 L1393.6 342.9 L1403.8 349.8 L1414.1 351.1 L1421.8 353.2 L1425.6 359.6 L1426.9 368.5 L1435.8 377.0 L1441.0 376.2 L1449.9 383.1 L1453.8 392.9 L1460.2 391.6 L1470.4 385.2 L1480.7 394.1 L1487.1 403.1 L1493.0 412.1 L1492.2 418.0 L1501.2 424.9 L1507.6 430.8 L1515.3 430.0 L1523.0 436.4 L1529.4 445.4 L1538.3 447.9 L1544.2 446.7 L1548.6 449.7 L1562.7 451.8 L1578.0 451.3 L1594.7 449.7 L1597.3 454.4 L1601.1 463.3 L1606.2 469.2 L1612.6 469.7 L1619.0 474.9 L1626.7 480.0 L1629.3 481.3 L1629.3 495.3 Z" fill="#b8bcfd" stroke="#5c6270" stroke-width="1.6" stroke-linejoin="round"/><path d="M1592.2 1510.0 L1592.2 1522.0 L1593.3 1533.9 L1598.7 1539.3 L1592.2 1544.8 L1592.2 1552.4 L1599.8 1553.5 L1604.1 1558.9 L1597.6 1562.2 L1596.5 1568.7 L1604.1 1573.0 L1602.0 1581.7 L1603.0 1592.6 L1595.4 1597.0 L1592.2 1589.3 L1591.1 1599.1 L1582.4 1604.6 L1581.3 1610.0 L1584.6 1620.9 L1588.9 1630.7 L1594.3 1638.3 L1600.9 1641.5 L1607.4 1645.9 L1610.7 1636.1 L1618.3 1642.6 L1622.6 1648.0 L1631.3 1651.3 L1642.2 1656.7 L1645.4 1666.5 L1652.0 1672.0 L1653.0 1675.2 L1649.8 1677.4 L1648.7 1686.1 L1653.0 1692.6 L1655.2 1699.1 L1657.0 1703.0 L1659.1 1695.9 L1667.2 1692.6 L1663.9 1689.3 L1665.0 1683.9 L1663.9 1677.4 L1658.5 1672.0 L1661.7 1668.7 L1667.2 1662.2 L1668.3 1657.8 L1665.0 1652.4 L1669.3 1642.6 L1670.0 1630.7 L1666.1 1623.0 L1660.7 1616.5 L1656.3 1608.9 L1653.0 1603.5 L1654.1 1595.9 L1658.5 1586.1 L1657.4 1575.2 L1655.2 1564.3 L1654.1 1555.7 L1655.2 1545.9 L1658.5 1541.5 L1666.1 1540.4 L1670.4 1545.9 L1673.7 1551.3 L1680.2 1549.1 L1685.2 1542.6 L1683.5 1533.9 L1679.1 1528.5 L1675.9 1522.0 L1675.9 1510.0 Z" fill="#b8bcfd" stroke="#5c6270" stroke-width="1.6" stroke-linejoin="round"/><path d="M1883.5 1510.0 L1883.5 1522.0 L1882.4 1533.9 L1877.0 1535.7 L1880.2 1538.3 L1884.6 1545.9 L1887.8 1549.1 L1896.5 1553.5 L1902.0 1560.0 L1907.4 1563.3 L1913.9 1570.9 L1918.3 1579.6 L1915.0 1583.9 L1921.5 1590.4 L1927.0 1599.1 L1929.1 1605.7 L1932.4 1612.2 L1938.9 1614.3 L1942.2 1610.0 L1948.7 1606.7 L1959.6 1607.4 L1968.3 1610.0 L1974.8 1616.5 L1981.3 1623.0 L1986.7 1631.7 L1985.7 1642.6 L1990.0 1653.5 L1995.4 1662.2 L1998.7 1668.7 L2007.4 1670.9 L2016.1 1675.2 L2022.6 1678.5 L2029.1 1673.0 L2040.0 1672.0 L2050.9 1670.9 L2060.7 1674.1 L2063.5 1664.3 L2059.6 1655.7 L2050.9 1651.3 L2043.3 1649.1 L2041.1 1640.4 L2033.5 1637.2 L2027.0 1633.9 L2021.5 1628.5 L2027.0 1618.7 L2028.0 1610.0 L2035.7 1602.4 L2028.0 1598.0 L2023.7 1588.3 L2016.1 1585.0 L2005.2 1579.6 L1995.4 1573.0 L1987.8 1566.5 L1983.5 1557.8 L1977.0 1549.1 L1971.5 1540.4 L1968.3 1531.7 L1967.2 1522.0 L1967.2 1510.0 Z" fill="#b8bcfd" stroke="#5c6270" stroke-width="1.6" stroke-linejoin="round"/><path d="M1907.4 1647.0 L1909.6 1636.1 L1918.3 1631.7 L1924.8 1625.2 L1933.5 1620.9 L1938.9 1618.7 L1940.0 1627.4 L1941.1 1638.3 L1944.3 1647.0 L1943.3 1657.8 L1940.0 1656.7 L1937.8 1649.1 L1934.6 1644.8 L1927.0 1643.0 L1918.3 1645.9 L1911.7 1653.5 L1907.4 1649.1 Z" fill="#b8bcfd" stroke="#5c6270" stroke-width="1.6" stroke-linejoin="round"/><path d="M1284.7 362.1 L1296.2 373.6 L1309.0 385.2 L1316.7 398.0 L1329.5 405.7 L1339.8 413.4 M1371.8 341.1 L1370.5 351.9 L1368.0 362.1 L1375.6 367.2 L1378.2 376.2 L1362.8 383.1 L1359.0 392.9 L1347.5 405.7 L1339.8 413.4 M1339.8 413.4 L1341.1 421.0 L1335.9 428.7 L1339.8 439.0 L1344.9 449.2 L1348.7 451.8 L1347.5 464.6 L1334.6 473.6 L1333.4 485.1 M1348.7 451.8 L1360.3 449.7 L1368.0 436.4 L1370.5 423.6 L1369.2 413.4 L1371.8 400.6 L1383.3 386.5 L1388.4 382.1 L1394.9 387.7 L1408.9 390.3 L1419.2 385.2 L1414.1 377.5 L1421.8 369.8 L1414.1 362.1 L1421.8 353.2 M1360.3 449.7 L1373.1 453.1 L1378.2 451.8 L1388.4 455.6 L1398.7 455.6 L1408.9 462.0 L1417.9 464.6 L1411.5 472.3 L1419.2 478.7 L1429.4 480.0 L1439.7 478.7 L1447.4 482.5 M1388.4 455.6 L1391.0 444.1 L1396.1 439.0 L1401.3 426.2 L1408.9 418.5 L1419.2 413.4 L1423.0 407.0 L1434.6 401.8 L1441.0 391.6 L1449.9 387.7 M1492.2 418.0 L1480.7 415.4 L1467.9 412.8 L1468.4 423.6 L1465.8 430.0 L1473.0 436.4 L1490.9 441.0 L1487.1 454.4 L1480.7 463.3 L1470.4 469.7 L1460.2 476.1 L1447.4 480.0 L1444.8 485.1 M1473.0 468.4 L1480.7 469.7 L1482.0 477.4 L1501.2 478.7 L1508.9 485.1 M1544.2 446.7 L1546.0 459.5 L1552.4 469.7 L1553.7 485.1 M1606.2 469.2 L1601.1 474.9 L1597.3 485.1 M1125.8 437.2 L1116.9 453.1 L1109.2 454.4 L1096.4 459.5 L1088.7 465.9 L1088.2 485.1 M1141.2 450.5 L1133.5 463.3 L1142.5 474.9 L1148.9 476.1 L1147.6 485.1 M1192.4 464.1 L1196.3 468.4 L1193.7 476.1 L1178.4 478.7 L1177.1 485.1 M1230.9 440.3 L1238.6 445.4 L1238.6 454.4 L1242.4 458.2 L1247.5 459.5 L1248.8 449.2 L1252.7 441.5 L1255.2 431.3 L1252.7 422.3 M1255.2 431.3 L1257.8 423.6 L1265.5 424.9 L1275.7 422.3 L1292.4 424.9 L1294.9 433.9 L1301.3 442.8 L1309.0 451.8 L1312.9 462.0 L1318.0 467.2 L1327.0 471.0 L1333.4 480.0 M1242.4 458.2 L1239.8 469.7 L1233.4 485.1 M1247.5 459.5 L1252.7 467.2 L1257.8 469.7 L1260.9 462.6 L1287.2 461.5 L1289.8 469.7 L1297.5 474.9 L1306.5 474.9 L1311.6 485.1 M1380.8 477.9 L1398.7 480.0 L1408.9 485.1 M1193.7 476.1 L1209.1 474.9 L1219.3 480.0 L1229.6 481.3 M1632.4 1510.0 L1632.4 1522.0 L1633.0 1531.7 L1629.1 1542.6 L1631.3 1557.8 L1636.7 1573.0 L1637.8 1586.1 L1633.5 1592.6 L1634.6 1605.7 L1637.8 1620.9 L1642.2 1631.7 L1649.8 1642.6 L1653.0 1651.3 L1652.0 1662.2 L1652.0 1672.0 M1649.8 1677.4 L1653.0 1676.3 L1656.3 1683.9 L1653.0 1686.1 L1648.7 1686.1 M1898.7 1510.0 L1898.7 1522.0 L1900.9 1529.6 L1894.3 1538.3 L1885.7 1544.8 M1907.4 1510.0 L1907.4 1523.0 L1917.2 1531.7 L1924.8 1529.6 L1931.3 1542.6 L1935.7 1549.1 L1940.0 1557.8 L1936.7 1566.5 L1942.2 1568.7 L1946.5 1573.0 L1960.7 1566.5 L1969.3 1565.4 L1977.0 1569.8 L1982.4 1577.4 L1985.7 1579.6 L1986.7 1569.8 L1987.8 1566.5 M1938.9 1614.3 L1942.2 1611.1 L1949.8 1607.8" fill="none" stroke="#5c6270" stroke-width="1.6" stroke-linejoin="round"/><circle cx="1892.17" cy="1556.74" r="1.2" fill="#5c6270"/><circle cx="1915" cy="1629.13" r="1.2" fill="#5c6270"/><circle cx="1909.57" cy="1634.35" r="1.2" fill="#5c6270"/><circle cx="1934.57" cy="1652.39" r="1.2" fill="#5c6270"/></svg>
<div class="r" style="left:604.0px;top:1747.0px;width:2003.0px;height:41.0px;background:#2b2b2b;"></div>
<div class="r" style="left:604.0px;top:1786.3px;width:2003.0px;height:1.7px;background:#626262;"></div>
<div class="r" style="left:604.0px;top:1747.0px;width:1.5px;height:41.0px;background:#5a5a5a;"></div>
<div class="r" style="left:2605.5px;top:1747.0px;width:1.5px;height:41.0px;background:#5a5a5a;"></div>
<div class="r" style="left:614.0px;top:1749.0px;width:166.2px;height:35.5px;background:#1f1f1f;border:2px solid #808080;"></div>
<span class="t" style="left:623.7px;top:1758.6px;font-size:19.7px;color:#ececec;transform:scaleX(0.952);">1:1,000,000</span>
<svg class="r" style="left:763.0px;top:1764.5px;" width="9" height="5" viewBox="0 0 9 5"><path d="M0 0 L9 0 L4.5 5 Z" fill="#d8d8d8"/></svg>
<div class="r" style="left:786.6px;top:1754.3px;width:1.8px;height:25.0px;background:#b4b4b4;"></div>
<div class="r" style="left:996.5px;top:1754.3px;width:1.8px;height:25.0px;background:#b4b4b4;"></div>
<div class="r" style="left:2223.9px;top:1754.3px;width:1.8px;height:25.0px;background:#b4b4b4;"></div>
<div class="r" style="left:2460.0px;top:1754.3px;width:1.8px;height:25.0px;background:#b4b4b4;"></div>
<div class="r" style="left:2511.3px;top:1754.3px;width:1.8px;height:25.0px;background:#b4b4b4;"></div>
<div class="r" style="left:2559.9px;top:1754.3px;width:1.8px;height:25.0px;background:#b4b4b4;"></div>
<svg class="r" style="left:798.5px;top:1752.0px;" width="27" height="27" viewBox="0 0 27 27"><rect x="0.8" y="0.8" width="17" height="17" fill="none" stroke="#8a8a8a" stroke-width="1.4"/><path d="M9.3 0.8 V17.8 M0.8 9.3 H17.8" fill="none" stroke="#8a8a8a" stroke-width="1.4" /><rect x="11" y="11" width="15.5" height="15.5" fill="#2b2b2b"/><path d="M19 11.5 V26 M11.8 18.8 H26.2" fill="none" stroke="#3a8fe0" stroke-width="3" /></svg>
<svg class="r" style="left:833.5px;top:1754.0px;" width="22" height="22" viewBox="0 0 22 22"><path d="M0.80 0.8 V20.6 M0.8 0.80 H20.6 M5.75 0.8 V20.6 M0.8 5.75 H20.6 M10.70 0.8 V20.6 M0.8 10.70 H20.6 M15.65 0.8 V20.6 M0.8 15.65 H20.6 M20.60 0.8 V20.6 M0.8 20.60 H20.6 " fill="none" stroke="#8a8a8a" stroke-width="1.5" /></svg>
<svg class="r" style="left:864.8px;top:1754.3px;" width="28" height="25" viewBox="0 0 28 25"><path d="M2 22.5 H26" fill="none" stroke="#3a8fe0" stroke-width="1.8" /><path d="M2 22.5 L24 22.5 L18 12 Z" fill="#2a6fb0" /><rect x="0.6" y="19.6" width="4.6" height="4.6" fill="#2b2b2b" stroke="#5ac050" stroke-width="1.3"/><path d="M5 14 L13.5 5.5" fill="none" stroke="#4aa3e3" stroke-width="1.6" /><path d="M3.8 15.2 L4.8 10.5 L8.5 14.2 Z M14.7 4.3 L13.7 9 L10 5.3 Z" fill="#4aa3e3" /><rect x="1.5" y="2" width="6.5" height="3.6" fill="none" stroke="#d0d0d0" stroke-width="1.4"/><path d="M17 4.5 H25 M21 0.5 V8.5" fill="none" stroke="#d0d0d0" stroke-width="1.6" /><rect x="19.5" y="13.8" width="7" height="3.8" fill="#2b2b2b" stroke="#d0d0d0" stroke-width="1.4"/></svg>
<svg class="r" style="left:898.0px;top:1751.6px;" width="28" height="28" viewBox="0 0 28 28"><rect x="0.5" y="0.5" width="11.5" height="12" fill="#2a6a2a"/><path d="M13.6 0 V27 M0 13.6 H27" fill="none" stroke="#b0b0b0" stroke-width="1.5" stroke-dasharray="1.6 2"/><rect x="11.4" y="11.4" width="4.6" height="4.6" fill="#555555" stroke="#c0c0c0" stroke-width="1.2"/></svg>
<svg class="r" style="left:931.0px;top:1751.3px;" width="28" height="28" viewBox="0 0 28 28"><text x="0" y="19.5" font-size="16.5" font-weight="bold" fill="#3a9de8" font-family="Liberation Sans, sans-serif">N</text><path d="M13.5 0.5 V27.5 L27 14" fill="none" stroke="#a0a0a0" stroke-width="1.5" /><path d="M18 3 C23 3.5 25 8 22 12" fill="none" stroke="#3a9de8" stroke-width="2" /><path d="M18.5 9 L22 13.5 L26 9.5" fill="none" stroke="#3a9de8" stroke-width="2" /></svg>
<svg class="r" style="left:968.0px;top:1762.5px;" width="16" height="11" viewBox="0 0 16 11"><path d="M1.8 1.8 L7.8 7.8 L13.8 1.8" fill="none" stroke="#f0f0f0" stroke-width="2.4" /></svg>
<span class="t" style="left:1463.8px;top:1760.7px;font-size:19.7px;color:#e4e4e4;transform:scaleX(0.969);">437,754.00E 4,182,541.70N m</span>
<svg class="r" style="left:1741.3px;top:1764.2px;" width="16.4" height="10.2" viewBox="0 0 16.4 10.2"><path d="M2 2 L8.2 8.2 L14.4 2" fill="none" stroke="#a8a8a8" stroke-width="3"/></svg>
<div class="r" style="left:2231.8px;top:1750.0px;width:220.0px;height:34.5px;background:#303030;"></div>
<svg class="r" style="left:2237.0px;top:1754.2px;" width="28" height="28" viewBox="0 0 28 28"><rect x="11.5" y="0.8" width="14.5" height="14.5" fill="#7a7a7a" stroke="#a0a0a0" stroke-width="1.2" rx="1.5"/><path d="M12 1.5 H17 C17 6 20 8 21 14.5 H12 Z" fill="#10a8d8" /><path d="M20.5 8 C21.5 6 23.5 5 26 4.5" fill="none" stroke="#444444" stroke-width="1.1" /><circle cx="8" cy="14.5" r="6.6" fill="#2b2b2b" stroke="#3a8fc0" stroke-width="1.8"/><path d="M4.5 14.5 H11.5 M8 11 V18" fill="none" stroke="#a0a0a0" stroke-width="1.6" /><path d="M12.5 19.5 L19 26" fill="none" stroke="#8a5a3a" stroke-width="2.6" /></svg>
<span class="t" style="left:2270.9px;top:1757.5px;font-size:19.7px;color:#a4a4a4;transform:scaleX(0.978);">Selected Features: 0</span>
<svg class="r" style="left:2477.0px;top:1758.2px;" width="20" height="20" viewBox="0 0 20 20"><rect x="0.6" y="0.6" width="18.6" height="18.6" fill="#5c5c5c" stroke="#6a6a6a" stroke-width="1.2" rx="1.5"/><path d="M5.5 1 C6 5 8.5 6.5 9.8 10 C10.3 13 9.8 16 10.5 19 M9.8 10 C10.8 7 13.5 5.5 18.5 5" fill="none" stroke="#3e3e3e" stroke-width="1.4" /></svg>
<div class="r" style="left:2526.6px;top:1755.0px;width:6.8px;height:23.3px;background:#a8a8a8;"></div>
<div class="r" style="left:2538.4px;top:1755.0px;width:6.8px;height:23.3px;background:#a8a8a8;"></div>
<svg class="r" style="left:2571.5px;top:1752.8px;" width="28" height="28" viewBox="0 0 28 28"><path d="M3.5 11.5 C4.5 5.5 10 2.5 15.5 3.5 C18.5 4 20.5 5.5 22 7.5" fill="none" stroke="#3a9de8" stroke-width="4.2" /><path d="M16.5 10.5 H26.5 V0.5 Z" fill="#3a9de8" /><path d="M24 16 C23 22 17.5 25 12 24 C9 23.5 7 22 5.5 20" fill="none" stroke="#3a9de8" stroke-width="4.2" /><path d="M11 17 H1 V27 Z" fill="#3a9de8" /></svg>
<!-- p_catalog -->
<div class="r" style="left:2619.0px;top:265.5px;width:571.0px;height:1522.5px;background:#333333;border:1.5px solid #585858;border-radius:5px;"></div>
<span class="t" style="left:2629.8px;top:280.6px;font-size:28px;color:#e4e4e4;transform:scaleX(0.942);">Catalog</span>
<svg class="r" style="left:3101.0px;top:288.0px;" width="15" height="10" viewBox="0 0 15 10"><path d="M1.5 1.5 L7.3 7.3 L13 1.5" fill="none" stroke="#d4d4d4" stroke-width="1.8" /></svg>
<svg class="r" style="left:3131.0px;top:282.5px;" width="14" height="18" viewBox="0 0 14 18"><rect x="3.6" y="1" width="6.6" height="9" fill="none" stroke="#d4d4d4" stroke-width="1.6"/><path d="M8.6 1 V10" fill="none" stroke="#d4d4d4" stroke-width="2.6" /><path d="M1 10.6 H13 M7 10.6 V17.5" fill="none" stroke="#d4d4d4" stroke-width="1.7" /></svg>
<svg class="r" style="left:3160.0px;top:283.7px;" width="17" height="17" viewBox="0 0 17 17"><path d="M1 1 L15.8 15.8 M15.8 1 L1 15.8" fill="none" stroke="#d4d4d4" stroke-width="1.7" /></svg>
<span class="t" style="left:2629.8px;top:328.0px;font-size:21.8px;color:#f4f4f4;text-shadow:0.3px 0 0 #f4f4f4;transform:scaleX(1.029);">Project</span>
<span class="t" style="left:2715.7px;top:328.0px;font-size:21.8px;color:#dcdcdc;transform:scaleX(0.971);">Portal</span>
<span class="t" style="left:2786.7px;top:328.0px;font-size:21.8px;color:#dcdcdc;transform:scaleX(1.009);">Computer</span>
<span class="t" style="left:2899.6px;top:328.0px;font-size:21.8px;color:#dcdcdc;transform:scaleX(0.942);">Favorites</span>
<div class="r" style="left:2630.2px;top:355.0px;width:68.8px;height:3.6px;background:#2b8ede;"></div>
<div class="r" style="left:3152.4px;top:329.6px;width:22.2px;height:5.2px;background:#b4b4b4;border-radius:2px;"></div>
<div class="r" style="left:3152.4px;top:337.7px;width:22.2px;height:5.2px;background:#b4b4b4;border-radius:2px;"></div>
<div class="r" style="left:3152.4px;top:345.8px;width:22.2px;height:5.2px;background:#b4b4b4;border-radius:2px;"></div>
<svg class="r" style="left:2628.5px;top:378.2px;" width="31" height="31" viewBox="0 0 31 31"><circle cx="15.3" cy="15.1" r="14" fill="none" stroke="#5c5c5c" stroke-width="1.7"/><path d="M14 8.5 L7.5 15.1 L14 21.7 M8 15.1 H23.5" fill="none" stroke="#686868" stroke-width="2.6" /></svg>
<div class="r" style="left:2667.3px;top:373.8px;width:512.6px;height:39.0px;background:#222222;border:2px solid #7e7e7e;"></div>
<div class="r" style="left:2669.3px;top:375.8px;width:29.2px;height:35.0px;background:#333333;"></div>
<div class="r" style="left:2698.0px;top:375.8px;width:2.0px;height:35.0px;background:#7e7e7e;"></div>
<div class="r" style="left:2736.0px;top:375.8px;width:2.0px;height:35.0px;background:#7e7e7e;"></div>
<svg class="r" style="left:2673.0px;top:383.0px;" width="22" height="22" viewBox="0 0 22 22"><path d="M1.5 10.5 L10.8 2 L20 10.5" fill="none" stroke="#787878" stroke-width="1.6" /><path d="M4 9 V19 H18 V9" fill="none" stroke="#787878" stroke-width="1.5" /><path d="M4.5 2.5 V6.5" fill="none" stroke="#787878" stroke-width="1.5" /><rect x="6.5" y="11.5" width="3.6" height="3.4" fill="#787878"/><rect x="12" y="12" width="3.6" height="7" fill="none" stroke="#787878" stroke-width="1.3"/><path d="M2 20.3 H20" fill="none" stroke="#5a7a50" stroke-width="1.2" /></svg>
<svg class="r" style="left:2705.0px;top:378.5px;" width="27" height="31" viewBox="0 0 27 31"><path d="M1.5 1.5 H25.3 L16.6 14 L15.3 29 H11.3 L10 14 Z" fill="none" stroke="#d0d0d0" stroke-width="1.7" stroke-linejoin="round"/><path d="M4.5 6 H22.3" fill="none" stroke="#d0d0d0" stroke-width="1.6" /></svg>
<span class="t" style="left:2746.2px;top:383.9px;font-size:20.5px;color:#c4c4c4;font-style:italic;transform:scaleX(0.926);">Search Project</span>
<svg class="r" style="left:3114.5px;top:382.0px;" width="22" height="22" viewBox="0 0 22 22"><circle cx="13.8" cy="8.2" r="6.3" fill="none" stroke="#c4c4c4" stroke-width="2.2"/><path d="M9.4 12.8 L2 20" fill="none" stroke="#c4c4c4" stroke-width="3" /></svg>
<svg class="r" style="left:3155.0px;top:390.0px;" width="15" height="10" viewBox="0 0 15 10"><path d="M1.5 1.5 L7.3 7.3 L13 1.5" fill="none" stroke="#d4d4d4" stroke-width="1.8" /></svg>
<span class="t" style="left:2703.5px;top:435.7px;font-size:19.7px;color:#e0e0e0;transform:scaleX(1.005);">Maps</span>
<svg class="r" style="left:2662.8px;top:433.2px;" width="26" height="25" viewBox="0 0 26 25"><path d="M1 4.2 Q1 2.8 2.4 2.8 L5 1 H11 L13 3 H23.6 Q25 3 25 4.4 V20.5 H1 Z" fill="#e6c838" /><path d="M3.4 6.2 H22.6 V8.6 H3.4 Z" fill="#333333" /><rect x="6.5" y="9.5" width="13.5" height="13.5" fill="#3fa040" stroke="#b0b0b0" stroke-width="1.3"/><path d="M14.5 10.2 H19.3 V17 C16 17.5 13.5 19.5 12.5 22.3 H9.5 C10 19 13 16 14 13.5 Z" fill="#1f74c0" /></svg>
<svg class="r" style="left:2641.5px;top:436.6px;" width="10" height="15" viewBox="0 0 10 15"><path d="M1.2 1.5 L8.2 7.3 L1.2 13.2 Z" fill="none" stroke="#b4b4b4" stroke-width="1.4" stroke-linejoin="miter"/></svg>
<span class="t" style="left:2703.5px;top:475.6px;font-size:19.7px;color:#e0e0e0;transform:scaleX(1.006);">Toolboxes</span>
<svg class="r" style="left:2662.8px;top:473.1px;" width="26" height="25" viewBox="0 0 26 25"><path d="M1 4.2 Q1 2.8 2.4 2.8 L5 1 H11 L13 3 H23.6 Q25 3 25 4.4 V20.5 H1 Z" fill="#e6c838" /><path d="M3.4 6.2 H22.6 V8.6 H3.4 Z" fill="#333333" /><rect x="5.5" y="13" width="15" height="10.5" fill="#c8431c" rx="1"/><path d="M10.5 13 V10.5 H15.5 V13" fill="none" stroke="#c8431c" stroke-width="1.5" /><path d="M5.5 17.5 H20.5" fill="none" stroke="#8a2a10" stroke-width="1.2" /><rect x="11.6" y="16.2" width="2.8" height="2.6" fill="#e8c0a0"/></svg>
<svg class="r" style="left:2641.5px;top:476.5px;" width="10" height="15" viewBox="0 0 10 15"><path d="M1.2 1.5 L8.2 7.3 L1.2 13.2 Z" fill="none" stroke="#b4b4b4" stroke-width="1.4" stroke-linejoin="miter"/></svg>
<span class="t" style="left:2703.5px;top:515.4px;font-size:19.7px;color:#e0e0e0;transform:scaleX(0.955);">Databases</span>
<svg class="r" style="left:2662.8px;top:512.9px;" width="26" height="25" viewBox="0 0 26 25"><path d="M1 4.2 Q1 2.8 2.4 2.8 L5 1 H11 L13 3 H23.6 Q25 3 25 4.4 V20.5 H1 Z" fill="#e6c838" /><path d="M3.4 6.2 H22.6 V8.6 H3.4 Z" fill="#333333" /><path d="M5.5 14.5 V21 C5.5 23 9 24.3 13 24.3 C17 24.3 20.5 23 20.5 21 V14.5" fill="#3c3c3c" stroke="#b4b4b4" stroke-width="1.4" /><ellipse cx="13" cy="14.5" rx="7.5" ry="3" fill="#3c3c3c" stroke="#b4b4b4" stroke-width="1.4"/></svg>
<svg class="r" style="left:2638.0px;top:518.0px;" width="11" height="10" viewBox="0 0 11 10"><path d="M10.8 0 V9.8 H0.3 Z" fill="#b0b0b0" /></svg>
<span class="t" style="left:2703.5px;top:635.7px;font-size:19.7px;color:#e0e0e0;transform:scaleX(0.953);">Styles</span>
<svg class="r" style="left:2662.8px;top:633.2px;" width="26" height="25" viewBox="0 0 26 25"><path d="M1 4.2 Q1 2.8 2.4 2.8 L5 1 H11 L13 3 H23.6 Q25 3 25 4.4 V20.5 H1 Z" fill="#e6c838" /><path d="M3.4 6.2 H22.6 V8.6 H3.4 Z" fill="#333333" /><ellipse cx="11.5" cy="16.5" rx="8.5" ry="6.3" fill="#4a4a4a" stroke="#c0c0c0" stroke-width="1.4"/><circle cx="8" cy="15.5" r="1.4" fill="#4a9fe0"/><circle cx="12" cy="13.5" r="1.3" fill="#e8c830"/><circle cx="11" cy="20.5" r="1.4" fill="#e87040"/><path d="M14 21.5 L23 13.5" fill="none" stroke="#c8c8c8" stroke-width="2.2" /><path d="M12.5 23.5 L15 20.5" fill="none" stroke="#e89040" stroke-width="2.4" /></svg>
<svg class="r" style="left:2641.5px;top:636.6px;" width="10" height="15" viewBox="0 0 10 15"><path d="M1.2 1.5 L8.2 7.3 L1.2 13.2 Z" fill="none" stroke="#b4b4b4" stroke-width="1.4" stroke-linejoin="miter"/></svg>
<span class="t" style="left:2703.5px;top:675.6px;font-size:19.7px;color:#e0e0e0;transform:scaleX(0.981);">Folders</span>
<svg class="r" style="left:2662.8px;top:673.1px;" width="26" height="25" viewBox="0 0 26 25"><path d="M1 4.2 Q1 2.8 2.4 2.8 L5 1 H11 L13 3 H23.6 Q25 3 25 4.4 V20.5 H1 Z" fill="#e6c838" /><path d="M3.4 6.2 H22.6 V8.6 H3.4 Z" fill="#333333" /><path d="M11.5 14.5 L19.5 19.5 L11.5 24.5 Z" fill="#b0b0b0" stroke="#333333" stroke-width="1" /></svg>
<svg class="r" style="left:2641.5px;top:676.5px;" width="10" height="15" viewBox="0 0 10 15"><path d="M1.2 1.5 L8.2 7.3 L1.2 13.2 Z" fill="none" stroke="#b4b4b4" stroke-width="1.4" stroke-linejoin="miter"/></svg>
<span class="t" style="left:2703.5px;top:715.4px;font-size:19.7px;color:#e0e0e0;transform:scaleX(0.969);">Locators</span>
<svg class="r" style="left:2662.8px;top:712.9px;" width="26" height="25" viewBox="0 0 26 25"><path d="M1 4.2 Q1 2.8 2.4 2.8 L5 1 H11 L13 3 H23.6 Q25 3 25 4.4 V20.5 H1 Z" fill="#e6c838" /><path d="M3.4 6.2 H22.6 V8.6 H3.4 Z" fill="#333333" /><path d="M3.5 17 L11 8.5 L18.5 17 Z" fill="#e0441c" /><rect x="6" y="17" width="10" height="7.5" fill="#e8e8e8" stroke="#4aa860" stroke-width="1.3"/><rect x="9.2" y="18.8" width="3.6" height="3.8" fill="#3a9de8"/></svg>
<svg class="r" style="left:2641.5px;top:716.3px;" width="10" height="15" viewBox="0 0 10 15"><path d="M1.2 1.5 L8.2 7.3 L1.2 13.2 Z" fill="none" stroke="#b4b4b4" stroke-width="1.4" stroke-linejoin="miter"/></svg>
<svg class="r" style="left:2664.5px;top:558.3px;" width="11" height="10" viewBox="0 0 11 10"><path d="M10.8 0 V9.8 H0.3 Z" fill="#b0b0b0" /></svg>
<svg class="r" style="left:2692.5px;top:553.0px;" width="30" height="29" viewBox="0 0 30 29"><path d="M1 5.5 V17 C1 19.5 5 21 10.5 21 C16 21 20 19.5 20 17 V5.5" fill="#333333" stroke="#9a9a9a" stroke-width="1.5" /><ellipse cx="10.5" cy="5.5" rx="9.5" ry="4" fill="#333333" stroke="#9a9a9a" stroke-width="1.5"/><path d="M8.5 20 L18.3 10.5 L28 20 V27 H8.5 Z" fill="#333333" stroke="#333333" stroke-width="3" /><path d="M8.2 19.8 L18.3 10.5 L28.3 19.8" fill="none" stroke="#f4f4f4" stroke-width="2.2" /><path d="M10.5 18.5 V27.2 H26 V18.5" fill="#333333" stroke="#f4f4f4" stroke-width="1.8" /><rect x="13.5" y="20.2" width="3.8" height="3.6" fill="#f4f4f4"/><rect x="19.2" y="20.5" width="3.6" height="6.4" fill="#d08a3a"/><rect x="11.2" y="12.8" width="2.6" height="4" fill="#d08a3a"/></svg>
<span class="t" style="left:2729.8px;top:555.3px;font-size:19.7px;color:#e4e4e4;transform:scaleX(0.976);">The_Four_Color_Theorem.gdb</span>
<div class="r" style="left:2710.0px;top:583.0px;width:469.0px;height:39.8px;background:#5e5e5e;border:1.5px solid #7e7e7e;"></div>
<svg class="r" style="left:2717.0px;top:591.8px;" width="27" height="22" viewBox="0 0 27 22"><rect x="1" y="1" width="24.3" height="19" fill="#2e2e2e" stroke="#c8c8c8" stroke-width="1.5" rx="3.5"/><path d="M5 4.5 H21 V16.5 H5 Z" fill="#6e6e6e" /><path d="M5 12 L12 10 L21 4.5 M12 10 L15.5 16.5" fill="none" stroke="#3a3a3a" stroke-width="1.2" /></svg>
<span class="t" style="left:2756.3px;top:594.9px;font-size:19.7px;color:#ececec;transform:scaleX(1.027);">MunicipalUnit2021</span>
<!-- p_dialog -->
<div class="r" style="left:837.0px;top:481.5px;width:1583.0px;height:1040.5px;background:#333333;border-radius:11px;box-shadow:0 32px 68px rgba(0,0,0,0.22),0 0 2px rgba(0,0,0,0.35);"></div>
<span class="t" style="left:851.8px;top:497.4px;font-size:27px;color:#a8a8a8;transform:scaleX(0.992);">Map Properties: Map</span>
<div class="r" style="left:855.0px;top:532.0px;width:266.5px;height:906.0px;background:#232323;border:1.5px solid #656565;"></div>
<div class="r" style="left:856.0px;top:533.0px;width:264.5px;height:36.5px;background:#2c5278;"></div>
<span class="t" style="left:870.9px;top:543.3px;font-size:19.7px;color:#ececec;font-weight:bold;transform:scaleX(1.009);">General</span>
<span class="t" style="left:870.9px;top:581.8px;font-size:19.7px;color:#dedede;">Extent</span>
<span class="t" style="left:870.9px;top:620.1px;font-size:19.7px;color:#dedede;transform:scaleX(0.980);">Clip Layers</span>
<span class="t" style="left:870.9px;top:658.8px;font-size:19.7px;color:#dedede;transform:scaleX(1.041);">Metadata</span>
<span class="t" style="left:870.9px;top:697.0px;font-size:19.7px;color:#dedede;">Coordinate Systems</span>
<span class="t" style="left:870.9px;top:735.3px;font-size:19.7px;color:#dedede;transform:scaleX(1.021);">Transformation</span>
<span class="t" style="left:870.9px;top:773.6px;font-size:19.7px;color:#dedede;transform:scaleX(1.074);">Illumination</span>
<span class="t" style="left:870.9px;top:811.9px;font-size:19.7px;color:#dedede;transform:scaleX(0.965);">Labels</span>
<span class="t" style="left:870.9px;top:850.6px;font-size:19.7px;color:#dedede;transform:scaleX(1.039);">Color Management</span>
<div class="r" style="left:1138.5px;top:532.0px;width:1263.0px;height:906.0px;background:#232323;border:1.5px solid #656565;"></div>
<span class="t" style="left:1156.2px;top:563.1px;font-size:19.7px;color:#dedede;transform:scaleX(1.037);">Name</span>
<span class="t" style="left:1156.2px;top:622.1px;font-size:19.7px;color:#dedede;transform:scaleX(1.060);">Map units</span>
<span class="t" style="left:1156.2px;top:678.3px;font-size:19.7px;color:#dedede;transform:scaleX(1.026);">Display units</span>
<span class="t" style="left:1156.2px;top:736.9px;font-size:19.7px;color:#dedede;transform:scaleX(0.977);">Reference scale</span>
<span class="t" style="left:1156.2px;top:795.2px;font-size:19.7px;color:#dedede;transform:scaleX(1.029);">Rotation</span>
<span class="t" style="left:1156.2px;top:851.3px;font-size:19.7px;color:#dedede;transform:scaleX(1.028);">Background color</span>
<div class="r" style="left:1356.5px;top:551.5px;width:1026.5px;height:39.0px;background:#222222;border:2px solid #858585;"></div>
<span class="t" style="left:1364.8px;top:562.3px;font-size:19.7px;color:#dedede;transform:scaleX(1.070);">Map</span>
<div class="r" style="left:1357.0px;top:610.5px;width:265.5px;height:38.0px;background:#3a3d43;border:1.5px solid #2a2a2a;"></div>
<span class="t" style="left:1364.8px;top:621.3px;font-size:19.7px;color:#9a9a9a;transform:scaleX(1.039);">Meters</span>
<div class="r" style="left:1356.5px;top:666.5px;width:266.5px;height:39.0px;background:#222222;border:2px solid #858585;"></div>
<span class="t" style="left:1361.7px;top:678.3px;font-size:19.7px;color:#f0f0f0;transform:scaleX(1.039);">Meters</span>
<svg class="r" style="left:1605.8px;top:682.8px;" width="8.5" height="4.5" viewBox="0 0 8.5 4.5"><path d="M0 0 L8.5 0 L4.25 4.5 Z" fill="#d8d8d8"/></svg>
<div class="r" style="left:1356.5px;top:725.0px;width:166.5px;height:39.0px;background:#222222;border:2px solid #858585;"></div>
<span class="t" style="left:1367.7px;top:736.8px;font-size:19.7px;color:#f0f0f0;transform:scaleX(1.056);">&lt;None&gt;</span>
<svg class="r" style="left:1505.8px;top:741.2px;" width="8.5" height="4.5" viewBox="0 0 8.5 4.5"><path d="M0 0 L8.5 0 L4.25 4.5 Z" fill="#d8d8d8"/></svg>
<div class="r" style="left:1356.5px;top:783.0px;width:133.5px;height:39.0px;background:#222222;border:2px solid #858585;"></div>
<span class="t" style="left:1364.8px;top:795.3px;font-size:19.7px;color:#f0f0f0;transform:scaleX(0.978);">0.00</span>
<svg class="r" style="left:1468.0px;top:799.2px;" width="15" height="9.5" viewBox="0 0 15 9.5"><path d="M2 2 L7.5 7.5 L13 2" fill="none" stroke="#c8c8c8" stroke-width="2.3"/></svg>
<div class="r" style="left:1356.5px;top:839.5px;width:60.0px;height:39.5px;background:#222222;border:2px solid #858585;"></div>
<svg class="r" style="left:1362.3px;top:845.0px;" width="29" height="29" viewBox="0 0 29 29"><rect x="0.00" y="0.00" width="7.3" height="7.3" fill="#ffffff"/><rect x="7.25" y="0.00" width="7.3" height="7.3" fill="#cfcfcf"/><rect x="14.50" y="0.00" width="7.3" height="7.3" fill="#ffffff"/><rect x="21.75" y="0.00" width="7.3" height="7.3" fill="#cfcfcf"/><rect x="0.00" y="7.25" width="7.3" height="7.3" fill="#cfcfcf"/><rect x="7.25" y="7.25" width="7.3" height="7.3" fill="#ffffff"/><rect x="14.50" y="7.25" width="7.3" height="7.3" fill="#cfcfcf"/><rect x="21.75" y="7.25" width="7.3" height="7.3" fill="#ffffff"/><rect x="0.00" y="14.50" width="7.3" height="7.3" fill="#ffffff"/><rect x="7.25" y="14.50" width="7.3" height="7.3" fill="#cfcfcf"/><rect x="14.50" y="14.50" width="7.3" height="7.3" fill="#ffffff"/><rect x="21.75" y="14.50" width="7.3" height="7.3" fill="#cfcfcf"/><rect x="0.00" y="21.75" width="7.3" height="7.3" fill="#cfcfcf"/><rect x="7.25" y="21.75" width="7.3" height="7.3" fill="#ffffff"/><rect x="14.50" y="21.75" width="7.3" height="7.3" fill="#cfcfcf"/><rect x="21.75" y="21.75" width="7.3" height="7.3" fill="#ffffff"/></svg>
<svg class="r" style="left:1399.7px;top:856.8px;" width="10" height="5.5" viewBox="0 0 10 5.5"><path d="M0 0 L10 0 L5.0 5.5 Z" fill="#b8b8b8"/></svg>
<div class="r" style="left:1157.0px;top:899.6px;width:23.0px;height:23.0px;background:#232323;border:1.5px solid #7a7a7a;"></div>
<div class="r" style="left:1157.0px;top:943.0px;width:23.0px;height:23.0px;background:#232323;border:1.5px solid #7a7a7a;"></div>
<div class="r" style="left:1157.0px;top:988.0px;width:23.0px;height:23.0px;background:#232323;border:1.5px solid #7a7a7a;"></div>
<svg class="r" style="left:1157.0px;top:899.6px;" width="23" height="23" viewBox="0 0 23 23"><path d="M5 12 L9.5 16.5 L18.5 6" fill="none" stroke="#e8e8e8" stroke-width="3"/></svg>
<span class="t" style="left:1186.5px;top:903.1px;font-size:19.7px;color:#dedede;transform:scaleX(0.989);">Use masking</span>
<span class="t" style="left:1186.5px;top:947.1px;font-size:19.7px;color:#dedede;transform:scaleX(1.022);">Draw up to and including the maximum scale in scale ranges</span>
<span class="t" style="left:1186.5px;top:991.6px;font-size:19.7px;color:#dedede;transform:scaleX(1.024);">Allow assignment of unique numeric IDs for sharing web layers</span>
<svg class="r" style="left:1633.5px;top:617.8px;" width="22" height="22" viewBox="0 0 22 22"><circle cx="11" cy="11" r="11" fill="#3c9be0"/><text x="11" y="17.6" font-size="18.5" font-weight="bold" text-anchor="middle" fill="#1c1c1c" font-family="Liberation Serif, serif">i</text></svg>
<svg class="r" style="left:1309.4px;top:900.0px;" width="22" height="22" viewBox="0 0 22 22"><circle cx="11" cy="11" r="11" fill="#3c9be0"/><text x="11" y="17.6" font-size="18.5" font-weight="bold" text-anchor="middle" fill="#1c1c1c" font-family="Liberation Serif, serif">i</text></svg>
<svg class="r" style="left:1757.7px;top:988.5px;" width="22" height="22" viewBox="0 0 22 22"><circle cx="11" cy="11" r="11" fill="#3c9be0"/><text x="11" y="17.6" font-size="18.5" font-weight="bold" text-anchor="middle" fill="#1c1c1c" font-family="Liberation Serif, serif">i</text></svg>
<div class="r" style="left:2300.5px;top:499.5px;width:15.5px;height:15.5px;border:1.5px solid #d0d0d0;"></div>
<svg class="r" style="left:2371.0px;top:497.0px;" width="21" height="21" viewBox="0 0 21 21"><path d="M2 2 L19 19 M19 2 L2 19" stroke="#d8d8d8" stroke-width="1.5" fill="none"/></svg>
<div class="r" style="left:2018.5px;top:1464.0px;width:116.5px;height:40.0px;background:#222222;border:2px solid #d8d8d8;"></div>
<span class="t" style="left:2062.7px;top:1475.1px;font-size:19.7px;color:#f0f0f0;transform:scaleX(0.984);">OK</span>
<div class="r" style="left:2152.0px;top:1464.0px;width:116.5px;height:40.0px;background:#222222;border:2px solid #d8d8d8;"></div>
<span class="t" style="left:2180.9px;top:1475.1px;font-size:19.7px;color:#f0f0f0;transform:scaleX(0.954);">Cancel</span>
<div class="r" style="left:2285.5px;top:1464.0px;width:116.5px;height:40.0px;background:#222222;border:2px solid #5a5a5a;"></div>
<span class="t" style="left:2318.9px;top:1475.1px;font-size:19.7px;color:#707070;transform:scaleX(1.005);">Apply</span>
<!-- p_color -->
<div class="r" style="left:1821.0px;top:791.0px;width:855.0px;height:580.0px;background:#333333;border-radius:11px;box-shadow:0 32px 68px rgba(0,0,0,0.24),0 0 2px rgba(0,0,0,0.45);"></div>
<span class="t" style="left:1834.0px;top:805.4px;font-size:27px;color:#3f9fe8;transform:scaleX(0.993);">Color Editor</span>
<svg class="r" style="left:2629.0px;top:806.8px;" width="20" height="20" viewBox="0 0 20 20"><path d="M1 1 L19 19 M19 1 L1 19" stroke="#d8d8d8" stroke-width="1.5" fill="none"/></svg>
<span class="t" style="left:1843.5px;top:877.6px;font-size:19.7px;color:#dedede;transform:scaleX(1.041);">Color Mode</span>
<div class="r" style="left:1962.5px;top:865.5px;width:68.0px;height:39.5px;background:#222222;border:2px solid #828282;"></div>
<span class="t" style="left:1967.0px;top:877.6px;font-size:19.7px;color:#f0f0f0;transform:scaleX(0.879);">RGB</span>
<svg class="r" style="left:2013.8px;top:881.8px;" width="8.5" height="4.5" viewBox="0 0 8.5 4.5"><path d="M0 0 L8.5 0 L4.25 4.5 Z" fill="#d8d8d8"/></svg>
<div class="r" style="left:1864.2px;top:945.4px;width:403.2px;height:42.5px;background:#262626;border:2px solid #969696;"></div>
<div class="r" style="left:1867.4px;top:948.6px;width:396.8px;height:36.1px;background:linear-gradient(90deg,#003333 0%,#ff3333 100%);"></div>
<svg class="r" style="left:1932.7px;top:978.4px;" width="26" height="17" viewBox="0 0 26 17"><path d="M13 0.5 L25.5 16.5 L0.5 16.5 Z" fill="#b8b8b8"/></svg>
<div class="r" style="left:1864.2px;top:1028.9px;width:403.2px;height:42.5px;background:#262626;border:2px solid #969696;"></div>
<div class="r" style="left:1867.4px;top:1032.1px;width:396.8px;height:36.1px;background:linear-gradient(90deg,#330033 0%,#33ff33 100%);"></div>
<svg class="r" style="left:1932.7px;top:1061.9px;" width="26" height="17" viewBox="0 0 26 17"><path d="M13 0.5 L25.5 16.5 L0.5 16.5 Z" fill="#b8b8b8"/></svg>
<div class="r" style="left:1864.2px;top:1112.3px;width:403.2px;height:42.5px;background:#262626;border:2px solid #969696;"></div>
<div class="r" style="left:1867.4px;top:1115.5px;width:396.8px;height:36.1px;background:linear-gradient(90deg,#333300 0%,#3333ff 100%);"></div>
<svg class="r" style="left:1932.7px;top:1145.3px;" width="26" height="17" viewBox="0 0 26 17"><path d="M13 0.5 L25.5 16.5 L0.5 16.5 Z" fill="#b8b8b8"/></svg>
<div class="r" style="left:1864.2px;top:1195.3px;width:403.2px;height:42.5px;background:#262626;border:2px solid #969696;"></div>
<div class="r" style="left:1867.4px;top:1198.5px;width:396.8px;height:36.1px;background:linear-gradient(90deg,#333333 0%,#ffffff 100%);"></div>
<svg class="r" style="left:1852.7px;top:1228.3px;" width="26" height="17" viewBox="0 0 26 17"><path d="M13 0.5 L25.5 16.5 L0.5 16.5 Z" fill="#b8b8b8"/></svg>
<span class="t" style="left:2293.5px;top:917.8px;font-size:19.7px;color:#dedede;transform:scaleX(0.927);">Red</span>
<span class="t" style="left:2293.5px;top:1001.3px;font-size:19.7px;color:#dedede;transform:scaleX(1.014);">Green</span>
<span class="t" style="left:2293.5px;top:1084.8px;font-size:19.7px;color:#dedede;transform:scaleX(0.990);">Blue</span>
<span class="t" style="left:2293.5px;top:1168.3px;font-size:19.7px;color:#dedede;transform:scaleX(0.970);">Transparency</span>
<div class="r" style="left:2294.3px;top:946.7px;width:119.7px;height:39.6px;background:#222222;border:2px solid #828282;"></div><span class="t" style="left:2302.5px;top:958.1px;font-size:19.7px;color:#f0f0f0;transform:scaleX(0.936);">51</span><svg class="r" style="left:2393.0px;top:953.0px;" width="12" height="27" viewBox="0 0 12 27"><path d="M1.5 6.5 L6 2 L10.5 6.5 M1.5 20.5 L6 25 L10.5 20.5" fill="none" stroke="#c0c0c0" stroke-width="1.7"/></svg>
<div class="r" style="left:2294.3px;top:1030.1px;width:119.7px;height:39.6px;background:#222222;border:2px solid #828282;"></div><span class="t" style="left:2302.5px;top:1041.5px;font-size:19.7px;color:#f0f0f0;transform:scaleX(0.936);">51</span><svg class="r" style="left:2393.0px;top:1036.4px;" width="12" height="27" viewBox="0 0 12 27"><path d="M1.5 6.5 L6 2 L10.5 6.5 M1.5 20.5 L6 25 L10.5 20.5" fill="none" stroke="#c0c0c0" stroke-width="1.7"/></svg>
<div class="r" style="left:2294.3px;top:1113.7px;width:119.7px;height:39.6px;background:#222222;border:2px solid #828282;"></div><span class="t" style="left:2302.5px;top:1125.1px;font-size:19.7px;color:#f0f0f0;transform:scaleX(0.936);">51</span><svg class="r" style="left:2393.0px;top:1120.0px;" width="12" height="27" viewBox="0 0 12 27"><path d="M1.5 6.5 L6 2 L10.5 6.5 M1.5 20.5 L6 25 L10.5 20.5" fill="none" stroke="#c0c0c0" stroke-width="1.7"/></svg>
<div class="r" style="left:2294.3px;top:1196.7px;width:119.7px;height:39.6px;background:#222222;border:2px solid #828282;"></div><span class="t" style="left:2302.5px;top:1208.1px;font-size:19.7px;color:#f0f0f0;">0%</span><svg class="r" style="left:2393.0px;top:1203.0px;" width="12" height="27" viewBox="0 0 12 27"><path d="M1.5 6.5 L6 2 L10.5 6.5 M1.5 20.5 L6 25 L10.5 20.5" fill="none" stroke="#c0c0c0" stroke-width="1.7"/></svg>
<span class="t" style="left:2234.0px;top:1265.6px;font-size:19.7px;color:#dedede;transform:scaleX(0.940);">HEX #</span>
<div class="r" style="left:2294.3px;top:1255.7px;width:119.7px;height:35.6px;background:#222222;border:2px solid #828282;"></div>
<span class="t" style="left:2302.2px;top:1265.6px;font-size:19.7px;color:#f0f0f0;transform:scaleX(0.989);">333333</span>
<span class="t" style="left:2431.8px;top:926.1px;font-size:19.7px;color:#dedede;transform:scaleX(1.016);">Current</span>
<span class="t" style="left:2541.8px;top:926.1px;font-size:19.7px;color:#dedede;transform:scaleX(0.986);">Previous</span>
<div class="r" style="left:2432.5px;top:947.0px;width:218.5px;height:82.6px;background:#333333;border:2px solid #909090;"></div>
<div class="r" style="left:2541.5px;top:948.5px;width:108.0px;height:79.6px;background:#000000;"></div>
<div class="r" style="left:2540.5px;top:948.5px;width:1.7px;height:79.6px;background:#9a9a9a;"></div>
<div class="r" style="left:2436.5px;top:1051.3px;width:210.5px;height:163.5px;background:linear-gradient(180deg,rgba(0,0,0,0) 0%,rgba(0,0,0,1) 100%),linear-gradient(90deg,#ff0000 0%,#ffff00 16.6%,#00ff00 33.3%,#00ffff 50%,#0000ff 66.6%,#ff00ff 83.3%,#ff0000 100%);"></div>
<div class="r" style="left:1837.8px;top:1313.5px;width:209.5px;height:39.2px;background:#232323;border:2px solid #2b8ede;"></div>
<div class="r" style="left:1840.8px;top:1316.5px;width:203.5px;height:33.2px;border:2px dotted #f0f0f0;"></div>
<span class="t" style="left:1855.7px;top:1325.6px;font-size:19.7px;color:#f0f0f0;transform:scaleX(0.978);">Save color to style...</span>
<div class="r" style="left:2409.6px;top:1313.5px;width:116.0px;height:39.4px;background:#222222;border:2px solid #d8d8d8;"></div>
<span class="t" style="left:2453.5px;top:1325.6px;font-size:19.7px;color:#f0f0f0;transform:scaleX(0.984);">OK</span>
<div class="r" style="left:2542.6px;top:1313.5px;width:116.0px;height:39.4px;background:#222222;border:2px solid #d8d8d8;"></div>
<span class="t" style="left:2571.3px;top:1325.6px;font-size:19.7px;color:#f0f0f0;transform:scaleX(0.954);">Cancel</span>
</div></body></html>
